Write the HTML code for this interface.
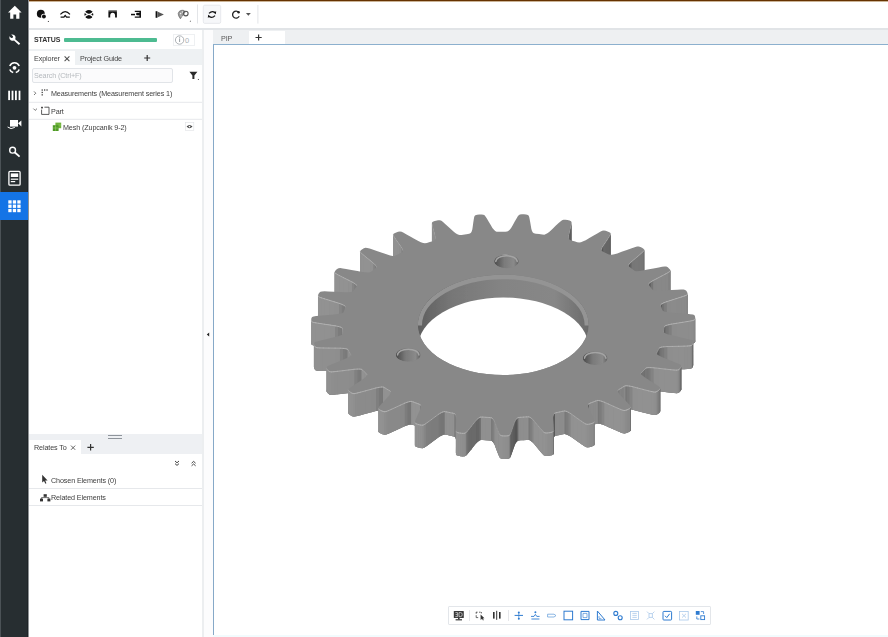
<!DOCTYPE html>
<html><head><meta charset="utf-8">
<style>
*{box-sizing:border-box;margin:0;padding:0}
html,body{width:888px;height:637px;overflow:hidden;background:#fff;font-family:"Liberation Sans",sans-serif;color:#333}
.a{position:absolute}
.t{position:absolute;white-space:nowrap;will-change:transform;font-size:7.2px;line-height:8px;color:#3d3d3d;letter-spacing:-0.12px}
</style></head><body>
<!-- sidebar -->
<div class="a" style="left:0;top:0;width:28px;height:637px;background:#272e31"></div>
<div class="a" style="left:0;top:0;width:1px;height:637px;background:#4b5256"></div>
<div class="a" style="left:27px;top:0;width:1px;height:637px;background:#1f2528"></div>
<div class="a" style="left:0;top:192px;width:28px;height:28px;background:#1474e6"></div>
<svg class="a" style="left:0;top:0" width="28" height="637" viewBox="0 0 28 637" fill="#fff">
  <!-- home -->
  <path d="M14.8 5.8 L21.6 12.4 L19.4 12.4 L19.4 18.8 L16.2 18.8 L16.2 14.6 L13.4 14.6 L13.4 18.8 L10.2 18.8 L10.2 12.4 L8 12.4 Z"/>
  <!-- wrench -->
  <path d="M9.3 36.2 L11.2 38 L12.8 37.8 L13 36.2 L11.2 34.6 Q14.4 34 15.4 36.6 Q15.8 38 15.2 39.2 L20.2 43.6 L18.9 45 L14 40.4 Q12.6 41 11 40.6 Q9 39.6 9.3 36.2Z"/>
  <!-- 3d eye -->
  <circle cx="14.5" cy="67.8" r="1.9"/>
  <path d="M9.8 66.09 A5 5 0 0 1 19.2 66.09" fill="none" stroke="#fff" stroke-width="1.6"/>
  <path d="M9.8 69.5 A5 5 0 0 0 13.2 72.6 M15.8 72.6 A5 5 0 0 0 19.2 69.5" fill="none" stroke="#fff" stroke-width="1.6"/>
  <!-- barcode -->
  <rect x="8.2" y="90.7" width="1.8" height="9.4"/><rect x="11.6" y="90.7" width="1.8" height="9.4"/><rect x="15" y="90.7" width="1.8" height="9.4"/><rect x="18.6" y="90.7" width="1.8" height="9.4"/>
  <!-- camera -->
  <rect x="10" y="120" width="8" height="6.6"/>
  <path d="M18 123.3 L21.4 120.4 L21.4 126.4 Z"/>
  <path d="M7.6 127 Q11 130 14.8 127.4" fill="none" stroke="#fff" stroke-width="1"/>
  <!-- search -->
  <circle cx="12.6" cy="150.2" r="2.9" fill="none" stroke="#fff" stroke-width="1.4"/>
  <path d="M14.6 152.2 L19.6 156.6" stroke="#fff" stroke-width="1.8"/>
  <!-- report -->
  <rect x="8.9" y="171.4" width="11.2" height="13.8" rx="1" fill="none" stroke="#fff" stroke-width="1.3"/>
  <rect x="10.8" y="173.4" width="7.4" height="3.6"/>
  <rect x="10.8" y="178.6" width="7.4" height="1.2"/>
  <rect x="10.8" y="181" width="4.4" height="1.2"/>
  <!-- grid -->
  <rect x="8.3" y="200.3" width="3.3" height="3.3"/><rect x="12.8" y="200.3" width="3.3" height="3.3"/><rect x="17.3" y="200.3" width="3.3" height="3.3"/>
  <rect x="8.3" y="204.6" width="3.3" height="3.3"/><rect x="12.8" y="204.6" width="3.3" height="3.3"/><rect x="17.3" y="204.6" width="3.3" height="3.3"/>
  <rect x="8.3" y="208.9" width="3.3" height="3.3"/><rect x="12.8" y="208.9" width="3.3" height="3.3"/><rect x="17.3" y="208.9" width="3.3" height="3.3"/>
</svg>

<!-- top brown line -->
<div class="a" style="left:28px;top:0;width:860px;height:1px;background:#663300"></div>
<div class="a" style="left:28px;top:1px;width:860px;height:1px;background:#cbb497"></div>

<!-- toolbar -->
<div class="a" style="left:28px;top:28px;width:860px;height:2px;background:#e1e4e7"></div>
<svg class="a" style="left:28px;top:2px" width="240" height="26" viewBox="28 2 240 26">
  <g fill="#111">
    <circle cx="40.8" cy="13.7" r="3.95"/>
    <circle cx="43.9" cy="16.5" r="2.8" fill="#fff"/>
    <circle cx="43.9" cy="16.5" r="1.95"/>
    <path d="M47.6 21.9 L48.9 20.7 L48.9 21.9Z"/>
    <path d="M60.4 14.4 Q65.2 8.8 70 14.4" fill="none" stroke="#111" stroke-width="1.1"/>
    <path d="M60.6 16.6 L63.6 16.6 L65.2 14.4 L66.8 16.6 L69.8 16.6 L69.8 17.8 L66.2 17.8 L65.2 16.4 L64.2 17.8 L60.6 17.8Z"/>
    <circle cx="88.9" cy="14.4" r="4.4"/>
    <path d="M84.3 11.6 Q88.9 17.4 93.5 11.6 M84.3 17.2 Q88.9 11.4 93.5 17.2" fill="none" stroke="#fff" stroke-width="1.2"/>
    <rect x="108.4" y="10.2" width="8.5" height="1" fill="#666"/>
    <path d="M108.4 11.3 L116.9 11.3 L116.9 17.4 L115.1 17.4 L115.1 15.6 A2.45 2.9 0 0 0 110.2 15.6 L110.2 17.4 L108.4 17.4Z"/>
    <path d="M134.8 10.7 L141 10.7 L141 17.8 L134.8 17.8 L134.8 16.4 L139.4 16.4 L139.4 15.2 L137.6 15.2 A1.4 1.4 0 0 1 136.6 12.8 L139.4 12.8 L139.4 12.1 L134.8 12.1Z"/>
    <rect x="131" y="13.8" width="4" height="1.5"/>
    <path d="M136.4 14.6 L139.4 14.6" stroke="#111" stroke-width="1"/>
    <rect x="155.6" y="11.2" width="1.7" height="6.6"/>
    <path d="M157.3 11.4 L163.9 14.5 L157.3 17.6Z" fill="#555"/>
    <path d="M180.4 18.8 Q178 15.6 178.2 13.4 Q178.8 10.6 182 10.2 Q184.6 10 185.4 11.8 L183.2 14.6 Q182.2 16 180.4 18.8Z" fill="#9a9a9a" stroke="#555" stroke-width="0.6"/>
    <circle cx="185.8" cy="13.6" r="2.3" fill="none" stroke="#555" stroke-width="1.1"/>
    <circle cx="180.6" cy="13.6" r="0.8" fill="#eee"/><circle cx="182.4" cy="12" r="0.7" fill="#eee"/><circle cx="181" cy="16" r="0.6" fill="#ddd"/>
    <path d="M189.6 21.6 L190.9 20.4 L190.9 21.6Z"/>
  </g>
  <rect x="197" y="4.5" width="1" height="19" fill="#e3e5e8"/>
  <rect x="203.3" y="5.2" width="17.4" height="18.2" rx="1.5" fill="#f6f7f9" stroke="#e2e5e8" stroke-width="0.8"/>
  <path d="M209 13.4 Q211.8 10.6 214.8 12.4 M215 15.6 Q212.2 18.6 209.2 16.6" fill="none" stroke="#111" stroke-width="1.25"/>
  <path d="M216.2 11.2 L215.8 14.2 L213.4 12.6Z M207.8 17.8 L208.2 14.8 L210.6 16.4Z" fill="#111"/>
  <path d="M238.8 12.4 A3.5 3.5 0 1 0 239.2 16.3" fill="none" stroke="#222" stroke-width="1.3"/>
  <circle cx="238.6" cy="12.2" r="1.2" fill="#222"/>
  <path d="M245.9 13 L250.8 13 L248.35 15.7Z" fill="#555"/>
  <rect x="257.4" y="5" width="1" height="18.6" fill="#e3e5e8"/>
</svg>

<!-- left panel -->
<div class="a" style="left:28px;top:30px;width:174px;height:19px;background:#fff"></div>
<div class="t" style="left:33.5px;top:36px;font-weight:bold;font-size:7px;color:#333">STATUS</div>
<div class="a" style="left:64px;top:38px;width:93px;height:4px;background:#4dbb91;border-radius:1px"></div>
<div class="a" style="left:172.5px;top:34px;width:22px;height:12.4px;border:1px solid #eef0f2;background:#fff"></div>
<svg class="a" style="left:172px;top:33px" width="24" height="14" viewBox="172 33 24 14">
  <circle cx="179.6" cy="40" r="4.2" fill="none" stroke="#9aa0a5" stroke-width="0.8"/>
  <rect x="179.1" y="38.4" width="1" height="3.6" fill="#9aa0a5"/>
  <rect x="179.1" y="36.8" width="1" height="1" fill="#9aa0a5"/>
  <text x="185" y="43" font-size="7.5" fill="#aab0b5" font-family="Liberation Sans">0</text>
</svg>
<div class="a" style="left:28px;top:49px;width:174px;height:16px;background:#eef1f3"></div>
<div class="a" style="left:28px;top:51px;width:47px;height:14px;background:#fff"></div>
<div class="t" style="left:33.5px;top:55.2px;color:#454545">Explorer</div>
<svg class="a" style="left:62px;top:53px" width="10" height="10" viewBox="62 53 10 10"><path d="M64.6 56.4 L69.4 61.2 M69.4 56.4 L64.6 61.2" stroke="#505050" stroke-width="1.05"/></svg>
<div class="t" style="left:79.6px;top:55.2px;color:#454545">Project Guide</div>
<svg class="a" style="left:143px;top:54px" width="8" height="8" viewBox="143 54 8 8"><path d="M147.2 55 L147.2 61 M144.2 58 L150.2 58" stroke="#333" stroke-width="1.2"/></svg>
<div class="a" style="left:28px;top:65.5px;width:174px;height:19px;background:#fff"></div>
<div class="a" style="left:31.5px;top:68.2px;width:141px;height:14.4px;border:1px solid #e1e4e8;border-radius:2px;background:#fbfbfc"></div>
<div class="t" style="left:34px;top:71.5px;color:#b5b9bd">Search (Ctrl+F)</div>
<svg class="a" style="left:186px;top:68px" width="16" height="16" viewBox="186 68 16 16">
  <path d="M189.4 71.8 L197.4 71.8 L194.4 75.4 L194.4 79.1 L192.4 79.1 L192.4 75.4Z" fill="#2a2a2a"/>
  <path d="M197.6 80 L198.9 78.8 L198.9 80Z" fill="#222"/>
</svg>
<!-- tree -->
<svg class="a" style="left:28px;top:84px" width="174" height="52" viewBox="28 84 174 52">
  <path d="M34 91.4 L35.8 93.2 L34 95" fill="none" stroke="#555" stroke-width="0.8"/>
  <g fill="#333">
    <rect x="41.6" y="89.4" width="1.2" height="1.3"/><rect x="41.6" y="91.8" width="1.2" height="1.3"/><rect x="41.6" y="94.2" width="1.2" height="1.3"/>
    <rect x="44" y="89.4" width="1.3" height="1.2"/><rect x="46.4" y="89.4" width="1.3" height="1.2"/>
  </g>
  <rect x="28" y="101.8" width="174" height="1" fill="#e6e8eb"/>
  <path d="M33.4 108.6 L35.2 110.4 L37 108.6" fill="none" stroke="#555" stroke-width="0.8"/>
  <path d="M44.4 107.2 L49 107.2 L49 114.4 L41.6 114.4 L41.6 109.6" fill="none" stroke="#333" stroke-width="0.8"/>
  <rect x="41.2" y="106.8" width="1.6" height="1.6" fill="#222"/>
  <rect x="28" y="118.8" width="174" height="1" fill="#e6e8eb"/>
  <!-- mesh icon -->
  <g>
    <rect x="55.4" y="122.6" width="5.8" height="5.6" fill="#6fb33a"/>
    <rect x="52.8" y="125.2" width="5.8" height="5.8" fill="#4e9a25"/>
    <path d="M53 128 L58.4 128 M55.6 125.4 L55.6 130.8 M58.4 125 L61 125" stroke="#a6d77a" stroke-width="0.5"/>
  </g>
  <rect x="185.3" y="122.5" width="8.5" height="8.1" fill="#fff" stroke="#dfe2e5" stroke-width="0.6"/>
  <path d="M186.6 126.6 Q189.5 123.4 192.5 126.6 Q189.5 129.8 186.6 126.6Z" fill="#444"/>
  <circle cx="189.5" cy="126.6" r="0.9" fill="#fff"/>
</svg>
<div class="t" style="left:51px;top:90px;color:#404040">Measurements (Measurement series 1)</div>
<div class="t" style="left:51px;top:107.5px;color:#404040">Part</div>
<div class="t" style="left:63px;top:123.5px;color:#404040">Mesh (Zupcanik 9-2)</div>

<!-- relates to panel -->
<div class="a" style="left:28px;top:433.5px;width:174px;height:20.5px;background:#eef0f3"></div>
<div class="a" style="left:108px;top:435px;width:14px;height:1.3px;background:#8f959c"></div>
<div class="a" style="left:108px;top:437.8px;width:14px;height:1.3px;background:#8f959c"></div>
<div class="a" style="left:28px;top:440.4px;width:52.7px;height:13.6px;background:#fff"></div>
<div class="t" style="left:33.5px;top:444px;color:#404040">Relates To</div>
<svg class="a" style="left:66px;top:442px" width="14" height="12" viewBox="66 442 14 12"><path d="M71 445.6 L75.2 449.8 M75.2 445.6 L71 449.8" stroke="#555" stroke-width="0.9"/></svg>
<svg class="a" style="left:84px;top:442px" width="12" height="12" viewBox="84 442 12 12"><path d="M90.6 444 L90.6 450.6 M87.4 447.3 L93.8 447.3" stroke="#333" stroke-width="1.2"/></svg>
<svg class="a" style="left:170px;top:456px" width="32" height="14" viewBox="170 456 32 14">
  <path d="M175 461 L177 462.8 L179 461 M175 463.6 L177 465.4 L179 463.6" fill="none" stroke="#3a3a3a" stroke-width="0.95"/>
  <path d="M191.6 463.2 L193.6 461.4 L195.6 463.2 M191.6 465.8 L193.6 464 L195.6 465.8" fill="none" stroke="#3a3a3a" stroke-width="0.95"/>
</svg>
<svg class="a" style="left:38px;top:472px" width="14" height="34" viewBox="38 472 14 34">
  <path d="M42.2 474.8 L42.2 482.6 L44 481 L45.4 483.8 L46.4 483.2 L45.2 480.6 L47.6 480.4Z" fill="#333"/>
  <rect x="43.6" y="494.2" width="3.2" height="2.6" fill="#333"/>
  <rect x="40" y="498.6" width="3" height="2.8" fill="#333"/>
  <rect x="47.4" y="498.6" width="3" height="2.8" fill="#333"/>
  <path d="M45.2 496.6 L45.2 497.6 L41.5 497.6 L41.5 498.8 M45.2 497.6 L48.9 497.6 L48.9 498.8" fill="none" stroke="#333" stroke-width="0.7"/>
</svg>
<div class="t" style="left:51.4px;top:476.5px;color:#404040">Chosen Elements (0)</div>
<div class="a" style="left:28px;top:488.4px;width:174px;height:1px;background:#e6e8eb"></div>
<div class="t" style="left:51.4px;top:494px;color:#404040">Related Elements</div>
<div class="a" style="left:28px;top:505.4px;width:174px;height:1px;background:#e6e8eb"></div>

<!-- panel border & gap -->
<div class="a" style="left:202px;top:30px;width:2px;height:607px;background:#eceef0"></div>
<div class="a" style="left:204px;top:30px;width:9px;height:607px;background:#fcfcfd"></div>
<svg class="a" style="left:205px;top:330px" width="6" height="8" viewBox="205 330 6 8"><path d="M209.2 332.4 L209.2 336.4 L206.8 334.4Z" fill="#222"/></svg>

<!-- view tab bar -->
<div class="a" style="left:213px;top:30px;width:675px;height:14.5px;background:#eef0f2"></div>
<div class="a" style="left:249px;top:31px;width:35.5px;height:13.5px;background:#fff"></div>
<div class="t" style="left:220.5px;top:34.5px;color:#5a5a5a">PIP</div>
<svg class="a" style="left:252px;top:32px" width="12" height="12" viewBox="252 32 12 12"><path d="M258.6 34.4 L258.6 40.6 M255.5 37.5 L261.7 37.5" stroke="#333" stroke-width="1.2"/></svg>

<!-- view -->
<div class="a" style="left:213px;top:44.2px;width:675px;height:592.8px;background:#fff;border-left:1.6px solid #86a9c8;border-top:1.6px solid #8cb0ce"></div>
<svg width="888" height="637" viewBox="0 0 888 637" style="position:absolute;left:0;top:0">
<defs>
<linearGradient id="hw" x1="0" y1="0" x2="1" y2="0"><stop offset="0" stop-color="#5e5e5e"/><stop offset="0.2" stop-color="#777"/><stop offset="0.5" stop-color="#848484"/><stop offset="0.8" stop-color="#878787"/><stop offset="1" stop-color="#6a6a6a"/></linearGradient>
<linearGradient id="sw" x1="0" y1="0" x2="1" y2="0"><stop offset="0" stop-color="#4a4a4a"/><stop offset="0.4" stop-color="#7a7a7a"/><stop offset="0.8" stop-color="#8a8a8a"/><stop offset="1" stop-color="#606060"/></linearGradient>
<filter id="bl" x="-5%" y="-5%" width="110%" height="110%"><feGaussianBlur stdDeviation="0.35"/></filter>
</defs>
<g filter="url(#bl)">
<path d="M486.00 440.32L489.27 440.50L491.29 440.77L492.52 441.58L493.66 443.01L494.65 444.78L495.75 447.70L497.05 451.20L498.31 454.40L499.10 456.32L499.91 457.78L500.96 458.54L502.80 458.89L504.98 458.95L507.16 458.87L508.98 458.50L510.01 457.73L510.77 456.26L511.51 454.34L512.67 451.12L513.86 447.61L514.87 444.67L515.82 442.90L516.91 441.45L518.12 440.64L520.13 440.35L523.38 440.13L526.63 439.88L528.71 439.87L530.23 440.48L531.90 441.73L533.58 443.31L535.82 446.01L538.48 449.24L540.98 452.19L542.52 453.96L543.88 455.26L545.21 455.86L547.13 455.96L549.28 455.73L551.37 455.36L553.00 454.75L553.69 453.87L553.85 452.34L553.79 450.37L553.64 447.09L553.40 443.51L553.21 440.52L553.42 438.66L553.91 437.12L554.76 436.16L556.60 435.61L559.68 434.97L562.74 434.28L564.76 434.00L566.48 434.40L568.61 435.38L570.87 436.70L574.12 439.03L578.00 441.82L581.61 444.36L583.81 445.87L585.67 446.96L587.19 447.36L589.11 447.21L591.10 446.69L592.99 446.05L594.33 445.25L594.65 444.29L594.19 442.79L593.36 440.87L591.90 437.70L590.24 434.25L588.86 431.37L588.32 429.53L588.18 427.96L588.62 426.92L590.20 426.14L592.94 425.10L595.65 424.03L597.49 423.48L599.33 423.64L601.79 424.32L604.52 425.30L608.62 427.13L613.50 429.33L618.03 431.32L620.77 432.49L623.01 433.31L624.66 433.50L626.46 433.09L628.19 432.32L629.77 431.45L630.76 430.49L630.68 429.52L629.64 428.11L628.07 426.36L625.38 423.47L622.39 420.33L619.90 417.71L618.64 416.00L617.87 414.49L617.89 413.41L619.11 412.44L621.37 411.07L623.57 409.66L625.15 408.89L627.00 408.80L629.67 409.12L632.72 409.72L637.43 410.95L643.06 412.44L648.26 413.77L651.40 414.55L653.90 415.04L655.58 415.01L657.17 414.37L658.54 413.39L659.74 412.34L660.31 411.27L659.85 410.33L658.28 409.11L656.05 407.61L652.28 405.16L648.12 402.50L644.65 400.28L642.74 398.78L641.39 397.42L640.98 396.37L641.78 395.26L643.43 393.62L645.01 391.97L646.24 391.00L648.01 390.66L650.73 390.63L653.93 390.80L659.01 391.37L665.09 392.07L670.67 392.67L674.04 393.01L676.67 393.16L678.29 392.90L679.58 392.07L680.53 390.93L681.27 389.75L681.40 388.63L680.58 387.78L678.56 386.79L675.79 385.64L671.15 383.75L666.04 381.73L661.78 380.03L659.33 378.82L657.47 377.67L656.65 376.71L656.99 375.52L657.93 373.71L658.81 371.89L659.62 370.78L661.21 370.22L663.84 369.82L667.03 369.56L672.20 369.44L678.39 369.31L684.06 369.15L687.47 369.03L690.09 368.83L691.57 368.36L692.49 367.38L692.96 366.14L693.21 364.89L692.89 363.79L691.76 363.07L689.40 362.38L686.24 361.63L680.97 360.41L675.19 359.12L670.36 358.03L667.50 357.19L665.23 356.32L664.05 355.49L663.91 354.29L664.10 352.40L664.23 350.51L664.58 349.32L665.89 348.57L668.30 347.83L671.30 347.15L676.28 346.35L682.25 345.39L687.71 344.48L690.98 343.91L693.44 343.36L694.70 342.71L695.20 341.63L695.17 340.37L694.91 339.12L694.16 338.08L692.77 337.54L690.20 337.18L686.83 336.87L681.21 336.39L675.07 335.90L669.94 335.49L666.82 335.05L664.26 334.50L662.79 333.85L662.17 332.71L661.60 330.84L660.97 328.98L660.84 327.79L661.82 326.87L663.86 325.83L666.51 324.77L671.04 323.33L676.47 321.60L681.42 319.99L684.37 319.00L686.55 318.13L687.51 317.34L687.57 316.22L687.03 314.99L686.28 313.81L685.14 312.90L683.57 312.56L680.93 312.56L677.52 312.70L671.86 312.98L665.69 313.33L660.54 313.61L657.32 313.60L654.62 313.41L652.92 312.97L651.86 311.94L650.57 310.20L649.22 308.47L648.61 307.33L649.19 306.31L650.77 305.02L652.92 303.64L656.75 301.63L661.35 299.23L665.52 297.00L668.00 295.64L669.77 294.51L670.39 293.60L670.00 292.51L668.99 291.39L667.79 290.33L666.32 289.61L664.65 289.48L662.08 289.83L658.82 290.42L653.42 291.45L647.56 292.61L642.66 293.57L639.53 293.99L636.82 294.16L634.99 293.97L633.55 293.10L631.60 291.58L629.59 290.08L628.54 289.05L628.71 287.98L629.73 286.52L631.27 284.89L634.19 282.42L637.71 279.47L640.88 276.74L642.75 275.09L644.02 273.75L644.26 272.79L643.45 271.78L642.02 270.82L640.43 269.96L638.70 269.45L637.03 269.54L634.67 270.23L631.73 271.24L626.89 272.96L621.65 274.87L617.27 276.46L614.38 277.28L611.82 277.81L609.96 277.86L608.22 277.21L605.71 275.99L603.16 274.80L601.72 273.94L601.46 272.87L601.87 271.32L602.72 269.52L604.58 266.73L606.82 263.40L608.82 260.32L609.98 258.46L610.69 256.99L610.53 256.02L609.34 255.14L607.56 254.41L605.67 253.78L603.79 253.51L602.20 253.83L600.17 254.81L597.73 256.18L593.70 258.50L589.36 261.06L585.73 263.19L583.25 264.37L580.97 265.23L579.18 265.53L577.23 265.13L574.30 264.28L571.34 263.46L569.60 262.81L568.92 261.81L568.70 260.24L568.81 258.38L569.50 255.42L570.35 251.87L571.07 248.61L571.46 246.65L571.56 245.13L571.03 244.20L569.51 243.51L567.49 243.03L565.40 242.67L563.46 242.66L562.04 243.18L560.46 244.40L558.63 246.07L555.63 248.86L552.43 251.92L549.75 254.48L547.81 255.97L545.93 257.11L544.31 257.63L542.25 257.51L539.06 257.07L535.86 256.66L533.90 256.26L532.84 255.38L532.00 253.88L531.37 252.06L530.86 249.08L530.27 245.52L529.67 242.25L529.26 240.29L528.75 238.79L527.87 237.97L526.11 237.49L523.96 237.29L521.78 237.22L519.89 237.47L518.72 238.17L517.66 239.57L516.54 241.43L514.75 244.55L512.86 247.96L511.26 250.81L509.97 252.51L508.60 253.87L507.23 254.60L505.17 254.75L501.90 254.75L498.62 254.78L496.55 254.65L495.17 253.93L493.75 252.59L492.41 250.90L490.73 248.07L488.74 244.68L486.85 241.58L485.67 239.73L484.58 238.34L483.38 237.66L481.49 237.43L479.31 237.52L477.16 237.74L475.42 238.23L474.56 239.07L474.09 240.57L473.75 242.54L473.24 245.81L472.76 249.38L472.35 252.36L471.77 254.19L470.98 255.69L469.94 256.58L468.00 257.01L464.81 257.44L461.63 257.91L459.57 258.06L457.94 257.55L456.02 256.43L454.04 254.96L451.28 252.43L447.99 249.40L444.91 246.64L443.03 244.99L441.41 243.79L439.97 243.28L438.04 243.31L435.96 243.69L433.95 244.19L432.46 244.90L431.95 245.83L432.10 247.36L432.55 249.31L433.36 252.56L434.32 256.10L435.10 259.06L435.27 260.91L435.10 262.48L434.44 263.49L432.72 264.16L429.79 265.01L426.89 265.89L424.94 266.31L423.15 266.03L420.84 265.19L418.33 264.03L414.63 261.94L410.22 259.43L406.12 257.15L403.63 255.80L401.58 254.84L399.98 254.54L398.11 254.82L396.23 255.47L394.48 256.23L393.31 257.12L393.19 258.09L393.94 259.55L395.16 261.40L397.25 264.45L399.59 267.77L401.53 270.54L402.44 272.32L402.90 273.88L402.66 274.94L401.25 275.82L398.74 277.04L396.27 278.28L394.54 278.95L392.68 278.92L390.11 278.41L387.20 277.62L382.76 276.07L377.47 274.22L372.57 272.55L369.61 271.56L367.23 270.91L365.55 270.82L363.84 271.35L362.28 272.23L360.88 273.20L360.10 274.23L360.36 275.18L361.68 276.51L363.60 278.14L366.85 280.84L370.45 283.75L373.45 286.19L375.04 287.80L376.11 289.25L376.30 290.32L375.29 291.36L373.32 292.88L371.42 294.42L370.00 295.30L368.18 295.52L365.47 295.37L362.32 294.98L357.39 294.07L351.50 292.97L346.07 292.00L342.80 291.44L340.22 291.12L338.55 291.26L337.10 292.00L335.93 293.07L334.95 294.20L334.60 295.30L335.24 296.20L337.05 297.31L339.57 298.64L343.81 300.83L348.48 303.18L352.37 305.16L354.56 306.52L356.18 307.78L356.79 308.80L356.22 309.95L354.92 311.69L353.68 313.44L352.65 314.49L350.96 314.94L348.27 315.16L345.05 315.20L339.89 314.97L333.72 314.69L328.05 314.46L324.64 314.35L322.00 314.38L320.43 314.74L319.32 315.66L318.60 316.85L318.11 318.08L318.20 319.20L319.18 319.99L321.39 320.83L324.37 321.79L329.37 323.35L334.85 325.02L339.42 326.42L342.10 327.46L344.17 328.47L345.18 329.38L345.08 330.58L344.51 332.44L344.00 334.31L343.42 335.46L341.96 336.13L339.42 336.70L336.31 337.17L331.20 337.64L325.07 338.18L319.47 338.72L316.11 339.07L313.55 339.45L312.17 340.01L311.46 341.05L311.24 342.31L311.24 343.57L311.78 344.64L313.05 345.28L315.53 345.80L318.82 346.34L324.30 347.20L330.30 348.09L335.31 348.85L338.33 349.49L340.75 350.21L342.09 350.95L342.47 352.13L342.66 354.02L342.91 355.91L342.81 357.11L341.65 357.95L339.41 358.84L336.57 359.72L331.78 360.85L326.04 362.20L320.80 363.47L317.67 364.26L315.33 364.97L314.22 365.70L313.93 366.80L314.22 368.06L314.73 369.28L315.68 370.26L317.17 370.71L319.80 370.89L323.21 370.97L328.89 371.07L335.08 371.14L340.25 371.21L343.45 371.44L346.09 371.81L347.69 372.35L348.54 373.45L349.47 375.27L350.47 377.07L350.85 378.25L350.06 379.22L348.23 380.39L345.82 381.62L341.61 383.36L336.57 385.44L331.97 387.37L329.24 388.56L327.25 389.56L326.46 390.42L326.62 391.53L327.40 392.71L328.38 393.84L329.70 394.66L331.33 394.90L333.95 394.72L337.31 394.35L342.88 393.69L348.93 392.94L353.99 392.31L357.19 392.11L359.91 392.12L361.69 392.43L362.94 393.39L364.58 395.03L366.27 396.65L367.10 397.75L366.73 398.80L365.42 400.18L363.56 401.70L360.16 403.96L356.08 406.65L352.38 409.14L350.19 410.66L348.66 411.90L348.23 412.84L348.83 413.91L350.06 414.95L351.47 415.91L353.08 416.54L354.76 416.55L357.24 416.03L360.36 415.22L365.51 413.84L371.10 412.30L375.77 411.01L378.80 410.39L381.46 410.03L383.31 410.11L384.92 410.87L387.16 412.25L389.46 413.60L390.71 414.56L390.76 415.63L390.04 417.15L388.83 418.88L386.42 421.52L383.53 424.69L380.93 427.61L379.40 429.37L378.40 430.79L378.36 431.76L379.37 432.71L380.98 433.57L382.74 434.32L384.55 434.71L386.19 434.50L388.40 433.66L391.11 432.46L395.58 430.43L400.40 428.18L404.43 426.31L407.13 425.30L409.57 424.60L411.41 424.42L413.27 424.95L416.01 425.99L418.78 427.00L420.38 427.77L420.86 428.81L420.76 430.38L420.28 432.22L418.99 435.12L417.43 438.58L416.07 441.77L415.29 443.69L414.88 445.20L415.22 446.15L416.59 446.94L418.50 447.56L420.51 448.06L422.43 448.20L423.94 447.77L425.76 446.66L427.91 445.13L431.45 442.56L435.24 439.73L438.42 437.37L440.65 436.03L442.74 435.02L444.45 434.61L446.48 434.87L449.56 435.52L452.66 436.13L454.52 436.67L455.40 437.61L455.93 439.16L456.19 441.01L456.10 444.00L455.97 447.58L455.91 450.86L455.92 452.84L456.12 454.36L456.84 455.24L458.49 455.83L460.59 456.17L462.74 456.39L464.66 456.27L465.97 455.66L467.29 454.33L468.78 452.56L471.19 449.58L473.75 446.32L475.91 443.60L477.54 442.00L479.17 440.74L480.67 440.11L482.75 440.10Z" fill="#858585"/>
<path d="M571.46 223.65L571.56 222.13L571.56 245.13L571.46 246.65ZM431.95 222.83L432.10 224.36L432.10 247.36L431.95 245.83ZM571.07 225.61L571.46 223.65L571.46 246.65L571.07 248.61ZM432.10 224.36L432.55 226.31L432.55 249.31L432.10 247.36ZM570.35 228.87L571.07 225.61L571.07 248.61L570.35 251.87ZM432.55 226.31L433.36 229.56L433.36 252.56L432.55 249.31ZM569.50 232.42L570.35 228.87L570.35 251.87L569.50 255.42ZM433.36 229.56L434.32 233.10L434.32 256.10L433.36 252.56ZM568.81 235.38L569.50 232.42L569.50 255.42L568.81 258.38ZM434.32 233.10L435.10 236.06L435.10 259.06L434.32 256.10ZM609.98 235.46L610.69 233.99L610.69 256.99L609.98 258.46ZM393.19 235.09L393.94 236.55L393.94 259.55L393.19 258.09ZM568.70 237.24L568.81 235.38L568.81 258.38L568.70 260.24ZM608.82 237.32L609.98 235.46L609.98 258.46L608.82 260.32ZM435.10 236.06L435.27 237.91L435.27 260.91L435.10 259.06ZM393.94 236.55L395.16 238.40L395.16 261.40L393.94 259.55ZM606.82 240.40L608.82 237.32L608.82 260.32L606.82 263.40ZM395.16 238.40L397.25 241.45L397.25 264.45L395.16 261.40ZM604.58 243.73L606.82 240.40L606.82 263.40L604.58 266.73ZM397.25 241.45L399.59 244.77L399.59 267.77L397.25 264.45ZM602.72 246.52L604.58 243.73L604.58 266.73L602.72 269.52ZM399.59 244.77L401.53 247.54L401.53 270.54L399.59 267.77ZM601.87 248.32L602.72 246.52L602.72 269.52L601.87 271.32ZM401.53 247.54L402.44 249.32L402.44 272.32L401.53 270.54ZM601.46 249.87L601.87 248.32L601.87 271.32L601.46 272.87ZM402.44 249.32L402.90 250.88L402.90 273.88L402.44 272.32ZM644.02 250.75L644.26 249.79L644.26 272.79L644.02 273.75ZM642.75 252.09L644.02 250.75L644.02 273.75L642.75 275.09ZM360.10 251.23L360.36 252.18L360.36 275.18L360.10 274.23ZM360.36 252.18L361.68 253.51L361.68 276.51L360.36 275.18ZM640.88 253.74L642.75 252.09L642.75 275.09L640.88 276.74ZM361.68 253.51L363.60 255.14L363.60 278.14L361.68 276.51ZM637.71 256.47L640.88 253.74L640.88 276.74L637.71 279.47ZM363.60 255.14L366.85 257.84L366.85 280.84L363.60 278.14ZM634.19 259.42L637.71 256.47L637.71 279.47L634.19 282.42ZM366.85 257.84L370.45 260.75L370.45 283.75L366.85 280.84ZM631.27 261.89L634.19 259.42L634.19 282.42L631.27 284.89ZM370.45 260.75L373.45 263.19L373.45 286.19L370.45 283.75ZM629.73 263.52L631.27 261.89L631.27 284.89L629.73 286.52ZM373.45 263.19L375.04 264.80L375.04 287.80L373.45 286.19ZM628.71 264.98L629.73 263.52L629.73 286.52L628.71 287.98ZM628.54 266.05L628.71 264.98L628.71 287.98L628.54 289.05ZM375.04 264.80L376.11 266.25L376.11 289.25L375.04 287.80ZM376.11 266.25L376.30 267.32L376.30 290.32L376.11 289.25ZM669.77 271.51L670.39 270.60L670.39 293.60L669.77 294.51ZM668.00 272.64L669.77 271.51L669.77 294.51L668.00 295.64ZM334.60 272.30L335.24 273.20L335.24 296.20L334.60 295.30ZM665.52 274.00L668.00 272.64L668.00 295.64L665.52 297.00ZM335.24 273.20L337.05 274.31L337.05 297.31L335.24 296.20ZM337.05 274.31L339.57 275.64L339.57 298.64L337.05 297.31ZM661.35 276.23L665.52 274.00L665.52 297.00L661.35 299.23ZM339.57 275.64L343.81 277.83L343.81 300.83L339.57 298.64ZM656.75 278.63L661.35 276.23L661.35 299.23L656.75 301.63ZM343.81 277.83L348.48 280.18L348.48 303.18L343.81 300.83ZM652.92 280.64L656.75 278.63L656.75 301.63L652.92 303.64ZM348.48 280.18L352.37 282.16L352.37 305.16L348.48 303.18ZM650.77 282.02L652.92 280.64L652.92 303.64L650.77 305.02ZM649.19 283.31L650.77 282.02L650.77 305.02L649.19 306.31ZM352.37 282.16L354.56 283.52L354.56 306.52L352.37 305.16ZM648.61 284.33L649.19 283.31L649.19 306.31L648.61 307.33ZM354.56 283.52L356.18 284.78L356.18 307.78L354.56 306.52ZM356.18 284.78L356.79 285.80L356.79 308.80L356.18 307.78ZM687.51 294.34L687.57 293.22L687.57 316.22L687.51 317.34ZM686.55 295.13L687.51 294.34L687.51 317.34L686.55 318.13ZM684.37 296.00L686.55 295.13L686.55 318.13L684.37 319.00ZM318.11 295.08L318.20 296.20L318.20 319.20L318.11 318.08ZM681.42 296.99L684.37 296.00L684.37 319.00L681.42 319.99ZM318.20 296.20L319.18 296.99L319.18 319.99L318.20 319.20ZM319.18 296.99L321.39 297.83L321.39 320.83L319.18 319.99ZM676.47 298.60L681.42 296.99L681.42 319.99L676.47 321.60ZM321.39 297.83L324.37 298.79L324.37 321.79L321.39 320.83ZM671.04 300.33L676.47 298.60L676.47 321.60L671.04 323.33ZM324.37 298.79L329.37 300.35L329.37 323.35L324.37 321.79ZM666.51 301.77L671.04 300.33L671.04 323.33L666.51 324.77ZM329.37 300.35L334.85 302.02L334.85 325.02L329.37 323.35ZM663.86 302.83L666.51 301.77L666.51 324.77L663.86 325.83ZM334.85 302.02L339.42 303.42L339.42 326.42L334.85 325.02ZM661.82 303.87L663.86 302.83L663.86 325.83L661.82 326.87ZM339.42 303.42L342.10 304.46L342.10 327.46L339.42 326.42ZM660.84 304.79L661.82 303.87L661.82 326.87L660.84 327.79ZM342.10 304.46L344.17 305.47L344.17 328.47L342.10 327.46ZM344.17 305.47L345.18 306.38L345.18 329.38L344.17 328.47ZM694.70 319.71L695.20 318.63L695.20 341.63L694.70 342.71ZM311.24 319.31L311.24 320.57L311.24 343.57L311.24 342.31ZM693.44 320.36L694.70 319.71L694.70 342.71L693.44 343.36ZM690.98 320.91L693.44 320.36L693.44 343.36L690.98 343.91ZM311.24 320.57L311.78 321.64L311.78 344.64L311.24 343.57ZM687.71 321.48L690.98 320.91L690.98 343.91L687.71 344.48ZM682.25 322.39L687.71 321.48L687.71 344.48L682.25 345.39ZM311.78 321.64L313.05 322.28L313.05 345.28L311.78 344.64ZM313.05 322.28L315.53 322.80L315.53 345.80L313.05 345.28ZM676.28 323.35L682.25 322.39L682.25 345.39L676.28 346.35ZM315.53 322.80L318.82 323.34L318.82 346.34L315.53 345.80ZM671.30 324.15L676.28 323.35L676.28 346.35L671.30 347.15ZM318.82 323.34L324.30 324.20L324.30 347.20L318.82 346.34ZM668.30 324.83L671.30 324.15L671.30 347.15L668.30 347.83ZM324.30 324.20L330.30 325.09L330.30 348.09L324.30 347.20ZM665.89 325.57L668.30 324.83L668.30 347.83L665.89 348.57ZM330.30 325.09L335.31 325.85L335.31 348.85L330.30 348.09ZM664.58 326.32L665.89 325.57L665.89 348.57L664.58 349.32ZM335.31 325.85L338.33 326.49L338.33 349.49L335.31 348.85ZM338.33 326.49L340.75 327.21L340.75 350.21L338.33 349.49ZM664.23 327.51L664.58 326.32L664.58 349.32L664.23 350.51ZM340.75 327.21L342.09 327.95L342.09 350.95L340.75 350.21ZM664.10 329.40L664.23 327.51L664.23 350.51L664.10 352.40ZM342.09 327.95L342.47 329.13L342.47 352.13L342.09 350.95ZM342.47 329.13L342.66 331.02L342.66 354.02L342.47 352.13ZM663.91 331.29L664.10 329.40L664.10 352.40L663.91 354.29ZM342.66 331.02L342.91 332.91L342.91 355.91L342.66 354.02ZM692.96 343.14L693.21 341.89L693.21 364.89L692.96 366.14ZM692.49 344.38L692.96 343.14L692.96 366.14L692.49 367.38ZM313.93 343.80L314.22 345.06L314.22 368.06L313.93 366.80ZM691.57 345.36L692.49 344.38L692.49 367.38L691.57 368.36ZM690.09 345.83L691.57 345.36L691.57 368.36L690.09 368.83ZM314.22 345.06L314.73 346.28L314.73 369.28L314.22 368.06ZM687.47 346.03L690.09 345.83L690.09 368.83L687.47 369.03ZM684.06 346.15L687.47 346.03L687.47 369.03L684.06 369.15ZM678.39 346.31L684.06 346.15L684.06 369.15L678.39 369.31ZM672.20 346.44L678.39 346.31L678.39 369.31L672.20 369.44ZM667.03 346.56L672.20 346.44L672.20 369.44L667.03 369.56ZM663.84 346.82L667.03 346.56L667.03 369.56L663.84 369.82ZM314.73 346.28L315.68 347.26L315.68 370.26L314.73 369.28ZM661.21 347.22L663.84 346.82L663.84 369.82L661.21 370.22ZM315.68 347.26L317.17 347.71L317.17 370.71L315.68 370.26ZM659.62 347.78L661.21 347.22L661.21 370.22L659.62 370.78ZM317.17 347.71L319.80 347.89L319.80 370.89L317.17 370.71ZM319.80 347.89L323.21 347.97L323.21 370.97L319.80 370.89ZM323.21 347.97L328.89 348.07L328.89 371.07L323.21 370.97ZM328.89 348.07L335.08 348.14L335.08 371.14L328.89 371.07ZM335.08 348.14L340.25 348.21L340.25 371.21L335.08 371.14ZM340.25 348.21L343.45 348.44L343.45 371.44L340.25 371.21ZM658.81 348.89L659.62 347.78L659.62 370.78L658.81 371.89ZM343.45 348.44L346.09 348.81L346.09 371.81L343.45 371.44ZM346.09 348.81L347.69 349.35L347.69 372.35L346.09 371.81ZM657.93 350.71L658.81 348.89L658.81 371.89L657.93 373.71ZM347.69 349.35L348.54 350.45L348.54 373.45L347.69 372.35ZM348.54 350.45L349.47 352.27L349.47 375.27L348.54 373.45ZM656.99 352.52L657.93 350.71L657.93 373.71L656.99 375.52ZM656.65 353.71L656.99 352.52L656.99 375.52L656.65 376.71ZM349.47 352.27L350.47 354.07L350.47 377.07L349.47 375.27ZM350.47 354.07L350.85 355.25L350.85 378.25L350.47 377.07ZM681.27 366.75L681.40 365.63L681.40 388.63L681.27 389.75ZM680.53 367.93L681.27 366.75L681.27 389.75L680.53 390.93ZM648.01 367.66L650.73 367.63L650.73 390.63L648.01 390.66ZM650.73 367.63L653.93 367.80L653.93 390.80L650.73 390.63ZM646.24 368.00L648.01 367.66L648.01 390.66L646.24 391.00ZM326.46 367.42L326.62 368.53L326.62 391.53L326.46 390.42ZM653.93 367.80L659.01 368.37L659.01 391.37L653.93 390.80ZM645.01 368.97L646.24 368.00L646.24 391.00L645.01 391.97ZM679.58 369.07L680.53 367.93L680.53 390.93L679.58 392.07ZM659.01 368.37L665.09 369.07L665.09 392.07L659.01 391.37ZM357.19 369.11L359.91 369.12L359.91 392.12L357.19 392.11ZM326.62 368.53L327.40 369.71L327.40 392.71L326.62 391.53ZM353.99 369.31L357.19 369.11L357.19 392.11L353.99 392.31ZM359.91 369.12L361.69 369.43L361.69 392.43L359.91 392.12ZM665.09 369.07L670.67 369.67L670.67 392.67L665.09 392.07ZM678.29 369.90L679.58 369.07L679.58 392.07L678.29 392.90ZM348.93 369.94L353.99 369.31L353.99 392.31L348.93 392.94ZM643.43 370.62L645.01 368.97L645.01 391.97L643.43 393.62ZM670.67 369.67L674.04 370.01L674.04 393.01L670.67 392.67ZM361.69 369.43L362.94 370.39L362.94 393.39L361.69 392.43ZM676.67 370.16L678.29 369.90L678.29 392.90L676.67 393.16ZM674.04 370.01L676.67 370.16L676.67 393.16L674.04 393.01ZM327.40 369.71L328.38 370.84L328.38 393.84L327.40 392.71ZM342.88 370.69L348.93 369.94L348.93 392.94L342.88 393.69ZM337.31 371.35L342.88 370.69L342.88 393.69L337.31 394.35ZM362.94 370.39L364.58 372.03L364.58 395.03L362.94 393.39ZM328.38 370.84L329.70 371.66L329.70 394.66L328.38 393.84ZM641.78 372.26L643.43 370.62L643.43 393.62L641.78 395.26ZM333.95 371.72L337.31 371.35L337.31 394.35L333.95 394.72ZM329.70 371.66L331.33 371.90L331.33 394.90L329.70 394.66ZM331.33 371.90L333.95 371.72L333.95 394.72L331.33 394.90ZM640.98 373.37L641.78 372.26L641.78 395.26L640.98 396.37ZM364.58 372.03L366.27 373.65L366.27 396.65L364.58 395.03ZM366.27 373.65L367.10 374.75L367.10 397.75L366.27 396.65ZM625.15 385.89L627.00 385.80L627.00 408.80L625.15 408.89ZM627.00 385.80L629.67 386.12L629.67 409.12L627.00 408.80ZM623.57 386.66L625.15 385.89L625.15 408.89L623.57 409.66ZM629.67 386.12L632.72 386.72L632.72 409.72L629.67 409.12ZM381.46 387.03L383.31 387.11L383.31 410.11L381.46 410.03ZM378.80 387.39L381.46 387.03L381.46 410.03L378.80 410.39ZM632.72 386.72L637.43 387.95L637.43 410.95L632.72 409.72ZM621.37 388.07L623.57 386.66L623.57 409.66L621.37 411.07ZM383.31 387.11L384.92 387.87L384.92 410.87L383.31 410.11ZM375.77 388.01L378.80 387.39L378.80 410.39L375.77 411.01ZM384.92 387.87L387.16 389.25L387.16 412.25L384.92 410.87ZM371.10 389.30L375.77 388.01L375.77 411.01L371.10 412.30ZM637.43 387.95L643.06 389.44L643.06 412.44L637.43 410.95ZM619.11 389.44L621.37 388.07L621.37 411.07L619.11 412.44ZM659.74 389.34L660.31 388.27L660.31 411.27L659.74 412.34ZM658.54 390.39L659.74 389.34L659.74 412.34L658.54 413.39ZM387.16 389.25L389.46 390.60L389.46 413.60L387.16 412.25ZM617.89 390.41L619.11 389.44L619.11 412.44L617.89 413.41ZM365.51 390.84L371.10 389.30L371.10 412.30L365.51 413.84ZM643.06 389.44L648.26 390.77L648.26 413.77L643.06 412.44ZM348.23 389.84L348.83 390.91L348.83 413.91L348.23 412.84ZM657.17 391.37L658.54 390.39L658.54 413.39L657.17 414.37ZM617.87 391.49L617.89 390.41L617.89 413.41L617.87 414.49ZM389.46 390.60L390.71 391.56L390.71 414.56L389.46 413.60ZM648.26 390.77L651.40 391.55L651.40 414.55L648.26 413.77ZM348.83 390.91L350.06 391.95L350.06 414.95L348.83 413.91ZM360.36 392.22L365.51 390.84L365.51 413.84L360.36 415.22ZM655.58 392.01L657.17 391.37L657.17 414.37L655.58 415.01ZM651.40 391.55L653.90 392.04L653.90 415.04L651.40 414.55ZM653.90 392.04L655.58 392.01L655.58 415.01L653.90 415.04ZM390.71 391.56L390.76 392.63L390.76 415.63L390.71 414.56ZM350.06 391.95L351.47 392.91L351.47 415.91L350.06 414.95ZM357.24 393.03L360.36 392.22L360.36 415.22L357.24 416.03ZM351.47 392.91L353.08 393.54L353.08 416.54L351.47 415.91ZM354.76 393.55L357.24 393.03L357.24 416.03L354.76 416.55ZM353.08 393.54L354.76 393.55L354.76 416.55L353.08 416.54ZM597.49 400.48L599.33 400.64L599.33 423.64L597.49 423.48ZM595.65 401.03L597.49 400.48L597.49 423.48L595.65 424.03ZM599.33 400.64L601.79 401.32L601.79 424.32L599.33 423.64ZM409.57 401.60L411.41 401.42L411.41 424.42L409.57 424.60ZM592.94 402.10L595.65 401.03L595.65 424.03L592.94 425.10ZM411.41 401.42L413.27 401.95L413.27 424.95L411.41 424.42ZM601.79 401.32L604.52 402.30L604.52 425.30L601.79 424.32ZM407.13 402.30L409.57 401.60L409.57 424.60L407.13 425.30ZM413.27 401.95L416.01 402.99L416.01 425.99L413.27 424.95ZM590.20 403.14L592.94 402.10L592.94 425.10L590.20 426.14ZM404.43 403.31L407.13 402.30L407.13 425.30L404.43 426.31ZM604.52 402.30L608.62 404.13L608.62 427.13L604.52 425.30ZM416.01 402.99L418.78 404.00L418.78 427.00L416.01 425.99ZM588.62 403.92L590.20 403.14L590.20 426.14L588.62 426.92ZM400.40 405.18L404.43 403.31L404.43 426.31L400.40 428.18ZM418.78 404.00L420.38 404.77L420.38 427.77L418.78 427.00ZM588.18 404.96L588.62 403.92L588.62 426.92L588.18 427.96ZM608.62 404.13L613.50 406.33L613.50 429.33L608.62 427.13ZM420.38 404.77L420.86 405.81L420.86 428.81L420.38 427.77ZM395.58 407.43L400.40 405.18L400.40 428.18L395.58 430.43ZM613.50 406.33L618.03 408.32L618.03 431.32L613.50 429.33ZM629.77 408.45L630.76 407.49L630.76 430.49L629.77 431.45ZM391.11 409.46L395.58 407.43L395.58 430.43L391.11 432.46ZM628.19 409.32L629.77 408.45L629.77 431.45L628.19 432.32ZM618.03 408.32L620.77 409.49L620.77 432.49L618.03 431.32ZM378.36 408.76L379.37 409.71L379.37 432.71L378.36 431.76ZM626.46 410.09L628.19 409.32L628.19 432.32L626.46 433.09ZM620.77 409.49L623.01 410.31L623.01 433.31L620.77 432.49ZM388.40 410.66L391.11 409.46L391.11 432.46L388.40 433.66ZM379.37 409.71L380.98 410.57L380.98 433.57L379.37 432.71ZM624.66 410.50L626.46 410.09L626.46 433.09L624.66 433.50ZM623.01 410.31L624.66 410.50L624.66 433.50L623.01 433.31ZM380.98 410.57L382.74 411.32L382.74 434.32L380.98 433.57ZM386.19 411.50L388.40 410.66L388.40 433.66L386.19 434.50ZM562.74 411.28L564.76 411.00L564.76 434.00L562.74 434.28ZM564.76 411.00L566.48 411.40L566.48 434.40L564.76 434.00ZM382.74 411.32L384.55 411.71L384.55 434.71L382.74 434.32ZM384.55 411.71L386.19 411.50L386.19 434.50L384.55 434.71ZM559.68 411.97L562.74 411.28L562.74 434.28L559.68 434.97ZM444.45 411.61L446.48 411.87L446.48 434.87L444.45 434.61ZM442.74 412.02L444.45 411.61L444.45 434.61L442.74 435.02ZM566.48 411.40L568.61 412.38L568.61 435.38L566.48 434.40ZM446.48 411.87L449.56 412.52L449.56 435.52L446.48 434.87ZM556.60 412.61L559.68 411.97L559.68 434.97L556.60 435.61ZM440.65 413.03L442.74 412.02L442.74 435.02L440.65 436.03ZM449.56 412.52L452.66 413.13L452.66 436.13L449.56 435.52ZM554.76 413.16L556.60 412.61L556.60 435.61L554.76 436.16ZM568.61 412.38L570.87 413.70L570.87 436.70L568.61 435.38ZM452.66 413.13L454.52 413.67L454.52 436.67L452.66 436.13ZM553.91 414.12L554.76 413.16L554.76 436.16L553.91 437.12ZM438.42 414.37L440.65 413.03L440.65 436.03L438.42 437.37ZM454.52 413.67L455.40 414.61L455.40 437.61L454.52 436.67ZM570.87 413.70L574.12 416.03L574.12 439.03L570.87 436.70ZM553.42 415.66L553.91 414.12L553.91 437.12L553.42 438.66ZM455.40 414.61L455.93 416.16L455.93 439.16L455.40 437.61ZM435.24 416.73L438.42 414.37L438.42 437.37L435.24 439.73ZM553.21 417.52L553.42 415.66L553.42 438.66L553.21 440.52ZM526.63 416.88L528.71 416.87L528.71 439.87L526.63 439.88ZM523.38 417.13L526.63 416.88L526.63 439.88L523.38 440.13ZM455.93 416.16L456.19 418.01L456.19 441.01L455.93 439.16ZM480.67 417.11L482.75 417.10L482.75 440.10L480.67 440.11ZM528.71 416.87L530.23 417.48L530.23 440.48L528.71 439.87ZM482.75 417.10L486.00 417.32L486.00 440.32L482.75 440.10ZM520.13 417.35L523.38 417.13L523.38 440.13L520.13 440.35ZM486.00 417.32L489.27 417.50L489.27 440.50L486.00 440.32ZM574.12 416.03L578.00 418.82L578.00 441.82L574.12 439.03ZM479.17 417.74L480.67 417.11L480.67 440.11L479.17 440.74ZM518.12 417.64L520.13 417.35L520.13 440.35L518.12 440.64ZM489.27 417.50L491.29 417.77L491.29 440.77L489.27 440.50ZM516.91 418.45L518.12 417.64L518.12 440.64L516.91 441.45ZM530.23 417.48L531.90 418.73L531.90 441.73L530.23 440.48ZM431.45 419.56L435.24 416.73L435.24 439.73L431.45 442.56ZM491.29 417.77L492.52 418.58L492.52 441.58L491.29 440.77ZM477.54 419.00L479.17 417.74L479.17 440.74L477.54 442.00ZM515.82 419.90L516.91 418.45L516.91 441.45L515.82 442.90ZM492.52 418.58L493.66 420.01L493.66 443.01L492.52 441.58ZM531.90 418.73L533.58 420.31L533.58 443.31L531.90 441.73ZM475.91 420.60L477.54 419.00L477.54 442.00L475.91 443.60ZM578.00 418.82L581.61 421.36L581.61 444.36L578.00 441.82ZM514.87 421.67L515.82 419.90L515.82 442.90L514.87 444.67ZM427.91 422.13L431.45 419.56L431.45 442.56L427.91 445.13ZM493.66 420.01L494.65 421.78L494.65 444.78L493.66 443.01ZM533.58 420.31L535.82 423.01L535.82 446.01L533.58 443.31ZM594.33 422.25L594.65 421.29L594.65 444.29L594.33 445.25ZM473.75 423.32L475.91 420.60L475.91 443.60L473.75 446.32ZM581.61 421.36L583.81 422.87L583.81 445.87L581.61 444.36ZM592.99 423.05L594.33 422.25L594.33 445.25L592.99 446.05ZM414.88 422.20L415.22 423.15L415.22 446.15L414.88 445.20ZM425.76 423.66L427.91 422.13L427.91 445.13L425.76 446.66ZM513.86 424.61L514.87 421.67L514.87 444.67L513.86 447.61ZM494.65 421.78L495.75 424.70L495.75 447.70L494.65 444.78ZM591.10 423.69L592.99 423.05L592.99 446.05L591.10 446.69ZM583.81 422.87L585.67 423.96L585.67 446.96L583.81 445.87ZM415.22 423.15L416.59 423.94L416.59 446.94L415.22 446.15ZM589.11 424.21L591.10 423.69L591.10 446.69L589.11 447.21ZM585.67 423.96L587.19 424.36L587.19 447.36L585.67 446.96ZM423.94 424.77L425.76 423.66L425.76 446.66L423.94 447.77ZM416.59 423.94L418.50 424.56L418.50 447.56L416.59 446.94ZM587.19 424.36L589.11 424.21L589.11 447.21L587.19 447.36ZM535.82 423.01L538.48 426.24L538.48 449.24L535.82 446.01ZM418.50 424.56L420.51 425.06L420.51 448.06L418.50 447.56ZM471.19 426.58L473.75 423.32L473.75 446.32L471.19 449.58ZM422.43 425.20L423.94 424.77L423.94 447.77L422.43 448.20ZM420.51 425.06L422.43 425.20L422.43 448.20L420.51 448.06ZM512.67 428.12L513.86 424.61L513.86 447.61L512.67 451.12ZM495.75 424.70L497.05 428.20L497.05 451.20L495.75 447.70ZM538.48 426.24L540.98 429.19L540.98 452.19L538.48 449.24ZM468.78 429.56L471.19 426.58L471.19 449.58L468.78 452.56ZM455.91 427.86L455.92 429.84L455.92 452.84L455.91 450.86ZM511.51 431.34L512.67 428.12L512.67 451.12L511.51 454.34ZM497.05 428.20L498.31 431.40L498.31 454.40L497.05 451.20ZM540.98 429.19L542.52 430.96L542.52 453.96L540.98 452.19ZM553.69 430.87L553.85 429.34L553.85 452.34L553.69 453.87ZM467.29 431.33L468.78 429.56L468.78 452.56L467.29 454.33ZM455.92 429.84L456.12 431.36L456.12 454.36L455.92 452.84ZM553.00 431.75L553.69 430.87L553.69 453.87L553.00 454.75ZM542.52 430.96L543.88 432.26L543.88 455.26L542.52 453.96ZM456.12 431.36L456.84 432.24L456.84 455.24L456.12 454.36ZM465.97 432.66L467.29 431.33L467.29 454.33L465.97 455.66ZM551.37 432.36L553.00 431.75L553.00 454.75L551.37 455.36ZM510.77 433.26L511.51 431.34L511.51 454.34L510.77 456.26ZM498.31 431.40L499.10 433.32L499.10 456.32L498.31 454.40ZM456.84 432.24L458.49 432.83L458.49 455.83L456.84 455.24ZM549.28 432.73L551.37 432.36L551.37 455.36L549.28 455.73ZM543.88 432.26L545.21 432.86L545.21 455.86L543.88 455.26ZM547.13 432.96L549.28 432.73L549.28 455.73L547.13 455.96ZM545.21 432.86L547.13 432.96L547.13 455.96L545.21 455.86ZM464.66 433.27L465.97 432.66L465.97 455.66L464.66 456.27ZM458.49 432.83L460.59 433.17L460.59 456.17L458.49 455.83ZM460.59 433.17L462.74 433.39L462.74 456.39L460.59 456.17ZM462.74 433.39L464.66 433.27L464.66 456.27L462.74 456.39ZM510.01 434.73L510.77 433.26L510.77 456.26L510.01 457.73ZM499.10 433.32L499.91 434.78L499.91 457.78L499.10 456.32ZM508.98 435.50L510.01 434.73L510.01 457.73L508.98 458.50ZM499.91 434.78L500.96 435.54L500.96 458.54L499.91 457.78ZM507.16 435.87L508.98 435.50L508.98 458.50L507.16 458.87ZM500.96 435.54L502.80 435.89L502.80 458.89L500.96 458.54ZM504.98 435.95L507.16 435.87L507.16 458.87L504.98 458.95ZM502.80 435.89L504.98 435.95L504.98 458.95L502.80 458.89Z" fill="#848484"/>
<path d="M571.44 223.95L571.58 221.83L571.58 244.83L571.44 246.95Z" fill="#565656"/>
<path d="M431.92 222.53L432.13 224.65L432.13 247.65L431.92 245.53Z" fill="#909090"/>
<path d="M571.01 225.91L571.52 223.36L571.52 246.36L571.01 248.91Z" fill="#565656"/>
<path d="M432.03 224.06L432.61 226.60L432.61 249.60L432.03 247.06Z" fill="#909090"/>
<path d="M570.29 229.16L571.13 225.32L571.13 248.32L570.29 252.16Z" fill="#565656"/>
<path d="M432.47 226.02L433.43 229.85L433.43 252.85L432.47 249.02Z" fill="#909090"/>
<path d="M569.43 232.71L570.42 228.58L570.42 251.58L569.43 255.71Z" fill="#565656"/>
<path d="M433.28 229.27L434.39 233.39L434.39 256.39L433.28 252.27Z" fill="#909090"/>
<path d="M568.74 235.67L569.57 232.13L569.57 255.13L568.74 258.67Z" fill="#555555"/>
<path d="M434.24 232.81L435.18 236.35L435.18 259.35L434.24 255.81Z" fill="#8f8f8f"/>
<path d="M609.85 235.73L610.82 233.72L610.82 256.72L609.85 258.73Z" fill="#5f5f5f"/>
<path d="M393.05 234.82L394.08 236.82L394.08 259.82L393.05 257.82Z" fill="#919191"/>
<path d="M568.68 237.54L568.83 235.08L568.83 258.08L568.68 260.54Z" fill="#494949"/>
<path d="M608.66 237.57L610.14 235.21L610.14 258.21L608.66 260.57Z" fill="#646464"/>
<path d="M435.08 235.76L435.30 238.21L435.30 261.21L435.08 258.76Z" fill="#838383"/>
<path d="M393.78 236.30L395.32 238.65L395.32 261.65L393.78 259.30Z" fill="#919191"/>
<path d="M606.66 240.65L608.98 237.07L608.98 260.07L606.66 263.65Z" fill="#656565"/>
<path d="M394.99 238.15L397.42 241.70L397.42 264.70L394.99 261.15Z" fill="#919191"/>
<path d="M604.41 243.98L606.99 240.15L606.99 263.15L604.41 266.98Z" fill="#666666"/>
<path d="M397.07 241.21L399.76 245.01L399.76 268.01L397.07 264.21Z" fill="#919191"/>
<path d="M602.55 246.77L604.75 243.48L604.75 266.48L602.55 269.77Z" fill="#656565"/>
<path d="M399.42 244.52L401.71 247.78L401.71 270.78L399.42 267.52Z" fill="#909090"/>
<path d="M601.74 248.59L602.85 246.25L602.85 269.25L601.74 271.59Z" fill="#525252"/>
<path d="M401.40 247.27L402.57 249.59L402.57 272.59L401.40 270.27Z" fill="#848484"/>
<path d="M601.38 250.16L601.95 248.03L601.95 271.03L601.38 273.16Z" fill="#424242"/>
<path d="M402.35 249.04L402.98 251.16L402.98 274.16L402.35 272.04Z" fill="#7b7b7b"/>
<path d="M643.95 251.05L644.33 249.50L644.33 272.50L643.95 274.05Z" fill="#575757"/>
<path d="M642.54 252.31L644.23 250.54L644.23 273.54L642.54 275.31Z" fill="#707070"/>
<path d="M360.02 250.94L360.44 252.47L360.44 275.47L360.02 273.94Z" fill="#909090"/>
<path d="M360.15 251.97L361.89 253.72L361.89 276.72L360.15 274.97Z" fill="#929292"/>
<path d="M640.65 253.94L642.97 251.89L642.97 274.89L640.65 276.94Z" fill="#767676"/>
<path d="M361.45 253.32L363.83 255.34L363.83 278.34L361.45 276.32Z" fill="#929292"/>
<path d="M637.48 256.67L641.10 253.55L641.10 276.55L637.48 279.67Z" fill="#777777"/>
<path d="M363.37 254.95L367.08 258.03L367.08 281.03L363.37 277.95Z" fill="#929292"/>
<path d="M633.96 259.61L637.94 256.28L637.94 279.28L633.96 282.61Z" fill="#787878"/>
<path d="M366.62 257.65L370.68 260.94L370.68 283.94L366.62 280.65Z" fill="#929292"/>
<path d="M631.04 262.08L634.42 259.22L634.42 282.22L631.04 285.08Z" fill="#777777"/>
<path d="M370.22 260.56L373.68 263.38L373.68 286.38L370.22 283.56Z" fill="#919191"/>
<path d="M629.52 263.74L631.48 261.67L631.48 284.67L629.52 286.74Z" fill="#636363"/>
<path d="M373.24 262.97L375.25 265.02L375.25 288.02L373.24 285.97Z" fill="#858585"/>
<path d="M628.53 265.22L629.90 263.27L629.90 286.27L628.53 288.22Z" fill="#525252"/>
<path d="M628.50 266.34L628.75 264.68L628.75 287.68L628.50 289.34Z" fill="#3e3e3e"/>
<path d="M374.86 264.56L376.28 266.49L376.28 289.49L374.86 287.56Z" fill="#7c7c7c"/>
<path d="M376.05 265.96L376.36 267.61L376.36 290.61L376.05 288.96Z" fill="#787878"/>
<path d="M669.60 271.76L670.56 270.36L670.56 293.36L669.60 294.76Z" fill="#676767"/>
<path d="M667.74 272.80L670.03 271.35L670.03 294.35L667.74 295.80Z" fill="#828282"/>
<path d="M334.43 272.05L335.42 273.44L335.42 296.44L334.43 295.05Z" fill="#919191"/>
<path d="M665.26 274.14L668.26 272.50L668.26 295.50L665.26 297.14Z" fill="#888888"/>
<path d="M334.99 273.04L337.31 274.47L337.31 297.47L334.99 296.04Z" fill="#929292"/>
<path d="M336.79 274.17L339.84 275.78L339.84 298.78L336.79 297.17Z" fill="#929292"/>
<path d="M661.08 276.37L665.78 273.86L665.78 296.86L661.08 299.37Z" fill="#888888"/>
<path d="M339.31 275.50L344.08 277.97L344.08 300.97L339.31 298.50Z" fill="#929292"/>
<path d="M656.49 278.77L661.61 276.09L661.61 299.09L656.49 301.77Z" fill="#888888"/>
<path d="M343.54 277.69L348.74 280.32L348.74 303.32L343.54 300.69Z" fill="#929292"/>
<path d="M652.66 280.78L657.02 278.49L657.02 301.49L652.66 303.78Z" fill="#878787"/>
<path d="M348.21 280.05L352.63 282.29L352.63 305.29L348.21 303.05Z" fill="#919191"/>
<path d="M650.52 282.18L653.17 280.48L653.17 303.48L650.52 305.18Z" fill="#757575"/>
<path d="M648.96 283.50L651.00 281.83L651.00 304.83L648.96 306.50Z" fill="#646464"/>
<path d="M352.11 282.00L354.81 283.68L354.81 306.68L352.11 305.00Z" fill="#858585"/>
<path d="M648.46 284.59L649.34 283.05L649.34 306.05L648.46 307.59Z" fill="#4b4b4b"/>
<path d="M354.32 283.33L356.41 284.97L356.41 307.97L354.32 306.33Z" fill="#7d7d7d"/>
<path d="M356.02 284.53L356.95 286.05L356.95 309.05L356.02 307.53Z" fill="#797979"/>
<path d="M687.49 294.64L687.59 292.92L687.59 315.92L687.49 317.64Z" fill="#565656"/>
<path d="M686.32 295.33L687.74 294.14L687.74 317.14L686.32 318.33Z" fill="#787878"/>
<path d="M684.09 296.11L686.83 295.02L686.83 318.02L684.09 319.11Z" fill="#8a8a8a"/>
<path d="M318.08 294.78L318.23 296.50L318.23 319.50L318.08 317.78Z" fill="#909090"/>
<path d="M681.13 297.09L684.65 295.90L684.65 318.90L681.13 320.09Z" fill="#8a8a8a"/>
<path d="M317.97 296.01L319.42 297.17L319.42 320.17L317.97 319.01Z" fill="#929292"/>
<path d="M318.90 296.88L321.67 297.94L321.67 320.94L318.90 319.88Z" fill="#929292"/>
<path d="M676.18 298.70L681.70 296.90L681.70 319.90L676.18 321.70Z" fill="#8a8a8a"/>
<path d="M321.10 297.74L324.66 298.88L324.66 321.88L321.10 320.74Z" fill="#929292"/>
<path d="M670.75 300.42L676.75 298.51L676.75 321.51L670.75 323.42Z" fill="#8b8b8b"/>
<path d="M324.09 298.70L329.65 300.44L329.65 323.44L324.09 321.70Z" fill="#929292"/>
<path d="M666.22 301.87L671.32 300.24L671.32 323.24L666.22 324.87Z" fill="#8a8a8a"/>
<path d="M329.08 300.27L335.13 302.11L335.13 325.11L329.08 323.27Z" fill="#919191"/>
<path d="M663.58 302.94L666.79 301.66L666.79 324.66L663.58 325.94Z" fill="#7d7d7d"/>
<path d="M334.56 301.94L339.71 303.51L339.71 326.51L334.56 324.94Z" fill="#909090"/>
<path d="M661.55 304.01L664.13 302.70L664.13 325.70L661.55 327.01Z" fill="#737373"/>
<path d="M339.14 303.32L342.38 304.56L342.38 327.56L339.14 326.32Z" fill="#858585"/>
<path d="M660.62 304.99L662.04 303.67L662.04 326.67L660.62 327.99Z" fill="#5c5c5c"/>
<path d="M341.83 304.32L344.44 305.61L344.44 328.61L341.83 327.32Z" fill="#7d7d7d"/>
<path d="M343.95 305.27L345.40 306.58L345.40 329.58L343.95 328.27Z" fill="#7a7a7a"/>
<path d="M694.57 319.98L695.33 318.36L695.33 341.36L694.57 342.98Z" fill="#5f5f5f"/>
<path d="M311.23 319.01L311.24 320.87L311.24 343.87L311.23 342.01Z" fill="#8f8f8f"/>
<path d="M693.18 320.50L694.96 319.57L694.96 342.57L693.18 343.50Z" fill="#888888"/>
<path d="M690.69 320.98L693.74 320.29L693.74 343.29L690.69 343.98Z" fill="#8c8c8c"/>
<path d="M311.11 320.30L311.91 321.91L311.91 344.91L311.11 343.30Z" fill="#919191"/>
<path d="M687.42 321.53L691.27 320.86L691.27 343.86L687.42 344.53Z" fill="#8d8d8d"/>
<path d="M681.96 322.44L688.01 321.43L688.01 344.43L681.96 345.44Z" fill="#8d8d8d"/>
<path d="M311.51 321.51L313.32 322.41L313.32 345.41L311.51 344.51Z" fill="#929292"/>
<path d="M312.76 322.22L315.83 322.87L315.83 345.87L312.76 345.22Z" fill="#919191"/>
<path d="M675.99 323.39L682.55 322.35L682.55 345.35L675.99 346.39Z" fill="#8d8d8d"/>
<path d="M315.24 322.76L319.11 323.39L319.11 346.39L315.24 345.76Z" fill="#919191"/>
<path d="M671.00 324.20L676.58 323.30L676.58 346.30L671.00 347.20Z" fill="#8c8c8c"/>
<path d="M318.52 323.30L324.60 324.24L324.60 347.24L318.52 346.30Z" fill="#919191"/>
<path d="M668.01 324.89L671.59 324.08L671.59 347.08L668.01 347.89Z" fill="#7f7f7f"/>
<path d="M324.01 324.15L330.60 325.14L330.60 348.14L324.01 347.15Z" fill="#919191"/>
<path d="M665.61 325.65L668.59 324.74L668.59 347.74L665.61 348.65Z" fill="#767676"/>
<path d="M330.00 325.05L335.61 325.89L335.61 348.89L330.00 348.05Z" fill="#909090"/>
<path d="M664.32 326.47L666.15 325.42L666.15 348.42L664.32 349.47Z" fill="#6e6e6e"/>
<path d="M335.02 325.78L338.62 326.56L338.62 349.56L335.02 348.78Z" fill="#848484"/>
<path d="M338.04 326.41L341.04 327.29L341.04 350.29L338.04 349.41Z" fill="#7c7c7c"/>
<path d="M664.15 327.79L664.66 326.04L664.66 349.04L664.15 350.79Z" fill="#585858"/>
<path d="M340.49 327.06L342.35 328.10L342.35 351.10L340.49 350.06Z" fill="#7a7a7a"/>
<path d="M664.08 329.70L664.25 327.21L664.25 350.21L664.08 352.70Z" fill="#565656"/>
<path d="M342.00 327.67L342.57 329.41L342.57 352.41L342.00 350.67Z" fill="#909090"/>
<path d="M342.45 328.83L342.69 331.32L342.69 354.32L342.45 351.83Z" fill="#909090"/>
<path d="M663.88 331.59L664.13 329.10L664.13 352.10L663.88 354.59Z" fill="#565656"/>
<path d="M342.62 330.72L342.95 333.21L342.95 356.21L342.62 353.72Z" fill="#909090"/>
<path d="M692.90 343.44L693.27 341.60L693.27 364.60L692.90 366.44Z" fill="#565656"/>
<path d="M692.38 344.66L693.07 342.86L693.07 365.86L692.38 367.66Z" fill="#5c5c5c"/>
<path d="M313.87 343.51L314.29 345.35L314.29 368.35L313.87 366.51Z" fill="#909090"/>
<path d="M691.36 345.58L692.70 344.16L692.70 367.16L691.36 368.58Z" fill="#707070"/>
<path d="M689.80 345.92L691.85 345.27L691.85 368.27L689.80 368.92Z" fill="#8b8b8b"/>
<path d="M314.11 344.78L314.84 346.56L314.84 369.56L314.11 367.78Z" fill="#919191"/>
<path d="M687.17 346.06L690.39 345.80L690.39 368.80L687.17 369.06Z" fill="#8e8e8e"/>
<path d="M683.76 346.16L687.77 346.02L687.77 369.02L683.76 369.16Z" fill="#8e8e8e"/>
<path d="M678.09 346.32L684.36 346.14L684.36 369.14L678.09 369.32Z" fill="#8f8f8f"/>
<path d="M671.90 346.45L678.69 346.30L678.69 369.30L671.90 369.45Z" fill="#8f8f8f"/>
<path d="M666.73 346.57L672.50 346.44L672.50 369.44L666.73 369.57Z" fill="#8e8e8e"/>
<path d="M663.54 346.85L667.33 346.54L667.33 369.54L663.54 369.85Z" fill="#818181"/>
<path d="M314.52 346.07L315.89 347.47L315.89 370.47L314.52 369.07Z" fill="#929292"/>
<path d="M660.91 347.26L664.14 346.78L664.14 369.78L660.91 370.26Z" fill="#787878"/>
<path d="M315.39 347.17L317.46 347.79L317.46 370.79L315.39 370.17Z" fill="#919191"/>
<path d="M659.34 347.88L661.49 347.12L661.49 370.12L659.34 370.88Z" fill="#727272"/>
<path d="M316.87 347.69L320.10 347.91L320.10 370.91L316.87 370.69Z" fill="#909090"/>
<path d="M319.50 347.88L323.51 347.98L323.51 370.98L319.50 370.88Z" fill="#8f8f8f"/>
<path d="M322.91 347.97L329.19 348.08L329.19 371.08L322.91 370.97Z" fill="#8f8f8f"/>
<path d="M328.59 348.07L335.38 348.15L335.38 371.15L328.59 371.07Z" fill="#8f8f8f"/>
<path d="M334.78 348.14L340.55 348.21L340.55 371.21L334.78 371.14Z" fill="#8e8e8e"/>
<path d="M339.96 348.19L343.75 348.46L343.75 371.46L339.96 371.19Z" fill="#838383"/>
<path d="M658.64 349.13L659.80 347.54L659.80 370.54L658.64 372.13Z" fill="#686868"/>
<path d="M343.15 348.40L346.39 348.85L346.39 371.85L343.15 371.40Z" fill="#7b7b7b"/>
<path d="M345.81 348.71L347.98 349.45L347.98 372.45L345.81 371.71Z" fill="#7a7a7a"/>
<path d="M657.80 350.98L658.94 348.61L658.94 371.61L657.80 373.98Z" fill="#5f5f5f"/>
<path d="M347.51 349.12L348.72 350.69L348.72 373.69L347.51 372.12Z" fill="#919191"/>
<path d="M348.40 350.18L349.61 352.53L349.61 375.53L348.40 373.18Z" fill="#919191"/>
<path d="M656.85 352.79L658.07 350.44L658.07 373.44L656.85 375.79Z" fill="#616161"/>
<path d="M656.57 354.00L657.07 352.24L657.07 375.24L656.57 377.00Z" fill="#585858"/>
<path d="M349.33 352.00L350.62 354.33L350.62 377.33L349.33 375.00Z" fill="#919191"/>
<path d="M350.38 353.78L350.94 355.54L350.94 378.54L350.38 376.78Z" fill="#909090"/>
<path d="M681.24 367.04L681.44 365.33L681.44 388.33L681.24 390.04Z" fill="#565656"/>
<path d="M680.37 368.19L681.43 366.49L681.43 389.49L680.37 391.19Z" fill="#656565"/>
<path d="M647.71 367.67L651.03 367.62L651.03 390.62L647.71 390.67Z" fill="#7a7a7a"/>
<path d="M650.43 367.61L654.23 367.81L654.23 390.81L650.43 390.61Z" fill="#838383"/>
<path d="M645.95 368.05L648.30 367.61L648.30 390.61L645.95 391.05Z" fill="#747474"/>
<path d="M326.41 367.12L326.66 368.83L326.66 391.83L326.41 390.12Z" fill="#909090"/>
<path d="M653.63 367.76L659.31 368.41L659.31 391.41L653.63 390.76Z" fill="#8f8f8f"/>
<path d="M644.78 369.15L646.48 367.81L646.48 390.81L644.78 392.15Z" fill="#7a7a7a"/>
<path d="M679.39 369.30L680.72 367.70L680.72 390.70L679.39 392.30Z" fill="#6c6c6c"/>
<path d="M658.71 368.34L665.38 369.10L665.38 392.10L658.71 391.34Z" fill="#909090"/>
<path d="M356.89 369.11L360.21 369.12L360.21 392.12L356.89 392.11Z" fill="#7a7a7a"/>
<path d="M326.45 368.28L327.56 369.96L327.56 392.96L326.45 391.28Z" fill="#919191"/>
<path d="M353.69 369.33L357.49 369.09L357.49 392.09L353.69 392.33Z" fill="#818181"/>
<path d="M359.62 369.06L361.98 369.49L361.98 392.49L359.62 392.06Z" fill="#797979"/>
<path d="M664.79 369.04L670.97 369.70L670.97 392.70L664.79 392.04Z" fill="#909090"/>
<path d="M678.04 370.07L679.83 368.91L679.83 391.91L678.04 393.07Z" fill="#828282"/>
<path d="M348.63 369.97L354.29 369.27L354.29 392.27L348.63 392.97Z" fill="#8c8c8c"/>
<path d="M643.22 370.84L645.22 368.75L645.22 391.75L643.22 393.84Z" fill="#707070"/>
<path d="M670.37 369.64L674.33 370.04L674.33 393.04L670.37 392.64Z" fill="#909090"/>
<path d="M361.45 369.25L363.18 370.57L363.18 393.57L361.45 392.25Z" fill="#929292"/>
<path d="M676.37 370.20L678.59 369.86L678.59 392.86L676.37 393.20Z" fill="#8d8d8d"/>
<path d="M673.74 369.99L676.97 370.17L676.97 393.17L673.74 392.99Z" fill="#909090"/>
<path d="M327.20 369.49L328.58 371.07L328.58 394.07L327.20 392.49Z" fill="#929292"/>
<path d="M342.58 370.73L349.23 369.90L349.23 392.90L342.58 393.73Z" fill="#8d8d8d"/>
<path d="M337.01 371.39L343.17 370.66L343.17 393.66L337.01 394.39Z" fill="#8d8d8d"/>
<path d="M362.73 370.18L364.79 372.24L364.79 395.24L362.73 393.18Z" fill="#929292"/>
<path d="M328.13 370.68L329.95 371.82L329.95 394.82L328.13 393.68Z" fill="#929292"/>
<path d="M641.57 372.48L643.64 370.41L643.64 393.41L641.57 395.48Z" fill="#727272"/>
<path d="M333.66 371.76L337.61 371.32L337.61 394.32L333.66 394.76Z" fill="#8d8d8d"/>
<path d="M329.40 371.62L331.63 371.94L331.63 394.94L329.40 394.62Z" fill="#909090"/>
<path d="M331.03 371.92L334.25 371.71L334.25 394.71L331.03 394.92Z" fill="#8e8e8e"/>
<path d="M640.81 373.61L641.96 372.02L641.96 395.02L640.81 396.61Z" fill="#686868"/>
<path d="M364.36 371.82L366.49 373.86L366.49 396.86L364.36 394.82Z" fill="#929292"/>
<path d="M366.09 373.41L367.29 374.99L367.29 397.99L366.09 396.41Z" fill="#919191"/>
<path d="M624.85 385.90L627.30 385.78L627.30 408.78L624.85 408.90Z" fill="#767676"/>
<path d="M626.71 385.76L629.96 386.16L629.96 409.16L626.71 408.76Z" fill="#7b7b7b"/>
<path d="M623.30 386.80L625.42 385.76L625.42 408.76L623.30 409.80Z" fill="#898989"/>
<path d="M629.37 386.07L633.01 386.78L633.01 409.78L629.37 409.07Z" fill="#848484"/>
<path d="M381.16 387.02L383.61 387.12L383.61 410.12L381.16 410.02Z" fill="#777777"/>
<path d="M378.51 387.43L381.75 386.99L381.75 409.99L378.51 410.43Z" fill="#787878"/>
<path d="M632.42 386.64L637.72 388.03L637.72 411.03L632.42 409.64Z" fill="#909090"/>
<path d="M621.11 388.23L623.82 386.50L623.82 409.50L621.11 411.23Z" fill="#828282"/>
<path d="M383.04 386.98L385.19 388.00L385.19 411.00L383.04 409.98Z" fill="#929292"/>
<path d="M375.48 388.07L379.10 387.33L379.10 410.33L375.48 411.07Z" fill="#7f7f7f"/>
<path d="M384.66 387.71L387.42 389.41L387.42 412.41L384.66 410.71Z" fill="#929292"/>
<path d="M370.81 389.38L376.06 387.93L376.06 410.93L370.81 412.38Z" fill="#8a8a8a"/>
<path d="M637.14 387.88L643.35 389.52L643.35 412.52L637.14 410.88Z" fill="#919191"/>
<path d="M618.86 389.60L621.62 387.91L621.62 410.91L618.86 412.60Z" fill="#848484"/>
<path d="M659.60 389.60L660.46 388.00L660.46 411.00L659.60 412.60Z" fill="#616161"/>
<path d="M658.32 390.59L659.97 389.14L659.97 412.14L658.32 413.59Z" fill="#767676"/>
<path d="M386.90 389.10L389.71 390.75L389.71 413.75L386.90 412.10Z" fill="#929292"/>
<path d="M617.66 390.60L619.35 389.26L619.35 412.26L617.66 413.60Z" fill="#7a7a7a"/>
<path d="M365.22 390.92L371.39 389.22L371.39 412.22L365.22 413.92Z" fill="#8b8b8b"/>
<path d="M642.77 389.37L648.55 390.85L648.55 413.85L642.77 412.37Z" fill="#919191"/>
<path d="M348.08 389.58L348.98 391.17L348.98 414.17L348.08 412.58Z" fill="#919191"/>
<path d="M656.92 391.55L658.79 390.22L658.79 413.22L656.92 414.55Z" fill="#7e7e7e"/>
<path d="M617.87 391.79L617.90 390.11L617.90 413.11L617.87 414.79Z" fill="#3e3e3e"/>
<path d="M389.22 390.42L390.94 391.74L390.94 414.74L389.22 413.42Z" fill="#929292"/>
<path d="M647.97 390.70L651.69 391.62L651.69 414.62L647.97 413.70Z" fill="#919191"/>
<path d="M348.60 390.71L350.29 392.14L350.29 415.14L348.60 413.71Z" fill="#929292"/>
<path d="M360.07 392.30L365.80 390.76L365.80 413.76L360.07 415.30Z" fill="#8b8b8b"/>
<path d="M655.30 392.12L657.45 391.26L657.45 414.26L655.30 415.12Z" fill="#8a8a8a"/>
<path d="M651.10 391.49L654.19 392.10L654.19 415.10L651.10 414.49Z" fill="#919191"/>
<path d="M653.60 392.05L655.88 392.01L655.88 415.01L653.60 415.05Z" fill="#8f8f8f"/>
<path d="M390.69 391.26L390.77 392.93L390.77 415.93L390.69 414.26Z" fill="#777777"/>
<path d="M349.81 391.78L351.71 393.08L351.71 416.08L349.81 414.78Z" fill="#929292"/>
<path d="M356.95 393.11L360.65 392.15L360.65 415.15L356.95 416.11Z" fill="#8b8b8b"/>
<path d="M351.19 392.81L353.35 393.65L353.35 416.65L351.19 415.81Z" fill="#929292"/>
<path d="M354.46 393.61L357.54 392.97L357.54 415.97L354.46 416.61Z" fill="#8c8c8c"/>
<path d="M352.78 393.54L355.06 393.56L355.06 416.56L352.78 416.54Z" fill="#8f8f8f"/>
<path d="M597.19 400.46L599.63 400.67L599.63 423.67L597.19 423.46Z" fill="#787878"/>
<path d="M595.36 401.11L597.78 400.40L597.78 423.40L595.36 424.11Z" fill="#8b8b8b"/>
<path d="M599.04 400.56L602.08 401.39L602.08 424.39L599.04 423.56Z" fill="#7c7c7c"/>
<path d="M409.27 401.63L411.70 401.39L411.70 424.39L409.27 424.63Z" fill="#767676"/>
<path d="M592.66 402.21L595.92 400.92L595.92 423.92L592.66 425.21Z" fill="#8a8a8a"/>
<path d="M411.12 401.34L413.56 402.03L413.56 425.03L411.12 424.34Z" fill="#919191"/>
<path d="M601.51 401.21L604.80 402.40L604.80 425.40L601.51 424.21Z" fill="#858585"/>
<path d="M406.84 402.38L409.86 401.51L409.86 424.51L406.84 425.38Z" fill="#767676"/>
<path d="M412.99 401.84L416.29 403.10L416.29 426.10L412.99 424.84Z" fill="#929292"/>
<path d="M589.92 403.24L593.22 401.99L593.22 424.99L589.92 426.24Z" fill="#8a8a8a"/>
<path d="M404.15 403.41L407.41 402.19L407.41 425.19L404.15 426.41Z" fill="#7d7d7d"/>
<path d="M604.25 402.18L608.89 404.25L608.89 427.25L604.25 425.18Z" fill="#919191"/>
<path d="M415.72 402.89L419.06 404.11L419.06 427.11L415.72 425.89Z" fill="#929292"/>
<path d="M588.36 404.05L590.47 403.01L590.47 426.01L588.36 427.05Z" fill="#898989"/>
<path d="M400.12 405.31L404.71 403.18L404.71 426.18L400.12 428.31Z" fill="#888888"/>
<path d="M418.51 403.87L420.65 404.90L420.65 427.90L418.51 426.87Z" fill="#929292"/>
<path d="M588.06 405.24L588.74 403.64L588.74 426.64L588.06 428.24Z" fill="#454545"/>
<path d="M608.34 404.01L613.78 406.45L613.78 429.45L608.34 427.01Z" fill="#929292"/>
<path d="M420.25 404.50L420.98 406.08L420.98 429.08L420.25 427.50Z" fill="#797979"/>
<path d="M395.30 407.56L400.67 405.05L400.67 428.05L395.30 430.56Z" fill="#898989"/>
<path d="M613.23 406.21L618.30 408.44L618.30 431.44L613.23 429.21Z" fill="#929292"/>
<path d="M629.56 408.66L630.97 407.28L630.97 430.28L629.56 431.66Z" fill="#727272"/>
<path d="M390.84 409.58L395.85 407.30L395.85 430.30L390.84 432.58Z" fill="#898989"/>
<path d="M627.93 409.46L630.04 408.31L630.04 431.31L627.93 432.46Z" fill="#888888"/>
<path d="M617.75 408.20L621.05 409.61L621.05 432.61L617.75 431.20Z" fill="#929292"/>
<path d="M378.14 408.55L379.59 409.92L379.59 432.92L378.14 431.55Z" fill="#929292"/>
<path d="M626.18 410.21L628.46 409.20L628.46 432.20L626.18 433.21Z" fill="#898989"/>
<path d="M620.49 409.39L623.29 410.41L623.29 433.41L620.49 432.39Z" fill="#929292"/>
<path d="M388.13 410.78L391.39 409.34L391.39 432.34L388.13 433.78Z" fill="#898989"/>
<path d="M379.11 409.57L381.25 410.71L381.25 433.71L379.11 432.57Z" fill="#929292"/>
<path d="M624.36 410.57L626.75 410.02L626.75 433.02L624.36 433.57Z" fill="#8c8c8c"/>
<path d="M622.71 410.27L624.95 410.53L624.95 433.53L622.71 433.27Z" fill="#909090"/>
<path d="M380.71 410.45L383.01 411.44L383.01 434.44L380.71 433.45Z" fill="#929292"/>
<path d="M385.91 411.61L388.68 410.56L388.68 433.56L385.91 434.61Z" fill="#8a8a8a"/>
<path d="M562.45 411.33L565.06 410.96L565.06 433.96L562.45 434.33Z" fill="#8d8d8d"/>
<path d="M564.47 410.93L566.78 411.46L566.78 434.46L564.47 433.93Z" fill="#797979"/>
<path d="M382.44 411.25L384.84 411.77L384.84 434.77L382.44 434.25Z" fill="#919191"/>
<path d="M384.25 411.75L386.49 411.46L386.49 434.46L384.25 434.75Z" fill="#8d8d8d"/>
<path d="M559.39 412.03L563.04 411.22L563.04 434.22L559.39 435.03Z" fill="#8c8c8c"/>
<path d="M444.16 411.57L446.78 411.91L446.78 434.91L444.16 434.57Z" fill="#909090"/>
<path d="M442.45 412.09L444.75 411.53L444.75 434.53L442.45 435.09Z" fill="#747474"/>
<path d="M566.21 411.27L568.88 412.51L568.88 435.51L566.21 434.27Z" fill="#7d7d7d"/>
<path d="M446.18 411.81L449.85 412.58L449.85 435.58L446.18 434.81Z" fill="#919191"/>
<path d="M556.31 412.67L559.98 411.90L559.98 434.90L556.31 435.67Z" fill="#8c8c8c"/>
<path d="M440.37 413.16L443.01 411.89L443.01 434.89L440.37 436.16Z" fill="#747474"/>
<path d="M449.26 412.46L452.95 413.19L452.95 436.19L449.26 435.46Z" fill="#919191"/>
<path d="M554.47 413.25L556.89 412.52L556.89 435.52L554.47 436.25Z" fill="#8b8b8b"/>
<path d="M568.35 412.23L571.13 413.85L571.13 436.85L568.35 435.23Z" fill="#858585"/>
<path d="M452.37 413.05L454.81 413.75L454.81 436.75L452.37 436.05Z" fill="#919191"/>
<path d="M553.71 414.34L554.96 412.94L554.96 435.94L553.71 437.34Z" fill="#565656"/>
<path d="M438.17 414.53L440.90 412.87L440.90 435.87L438.17 437.53Z" fill="#777777"/>
<path d="M454.31 413.45L455.60 414.83L455.60 437.83L454.31 436.45Z" fill="#7a7a7a"/>
<path d="M570.63 413.53L574.37 416.20L574.37 439.20L570.63 436.53Z" fill="#919191"/>
<path d="M553.33 415.95L554.00 413.83L554.00 436.83L553.33 438.95Z" fill="#444444"/>
<path d="M455.30 414.33L456.03 416.44L456.03 439.44L455.30 437.33Z" fill="#7b7b7b"/>
<path d="M435.00 416.91L438.66 414.19L438.66 437.19L435.00 439.91Z" fill="#7b7b7b"/>
<path d="M553.18 417.82L553.45 415.37L553.45 438.37L553.18 440.82Z" fill="#494949"/>
<path d="M526.33 416.88L529.01 416.87L529.01 439.87L526.33 439.88Z" fill="#8f8f8f"/>
<path d="M523.09 417.15L526.93 416.85L526.93 439.85L523.09 440.15Z" fill="#8e8e8e"/>
<path d="M455.89 415.86L456.24 418.31L456.24 441.31L455.89 438.86Z" fill="#838383"/>
<path d="M480.37 417.11L483.05 417.09L483.05 440.09L480.37 440.11Z" fill="#8f8f8f"/>
<path d="M528.43 416.75L530.51 417.60L530.51 440.60L528.43 439.75Z" fill="#7a7a7a"/>
<path d="M482.45 417.08L486.30 417.34L486.30 440.34L482.45 440.08Z" fill="#909090"/>
<path d="M519.83 417.37L523.68 417.11L523.68 440.11L519.83 440.37Z" fill="#8e8e8e"/>
<path d="M485.70 417.30L489.57 417.52L489.57 440.52L485.70 440.30Z" fill="#909090"/>
<path d="M573.88 415.86L578.25 419.00L578.25 442.00L573.88 438.86Z" fill="#929292"/>
<path d="M478.90 417.86L480.95 416.99L480.95 439.99L478.90 440.86Z" fill="#717171"/>
<path d="M517.82 417.68L520.43 417.31L520.43 440.31L517.82 440.68Z" fill="#8d8d8d"/>
<path d="M488.97 417.46L491.59 417.81L491.59 440.81L488.97 440.46Z" fill="#909090"/>
<path d="M516.66 418.62L518.36 417.47L518.36 440.47L516.66 441.62Z" fill="#686868"/>
<path d="M529.99 417.31L532.15 418.90L532.15 441.90L529.99 440.31Z" fill="#7d7d7d"/>
<path d="M431.21 419.74L435.48 416.55L435.48 439.55L431.21 442.74Z" fill="#7c7c7c"/>
<path d="M491.04 417.61L492.78 418.74L492.78 441.74L491.04 440.61Z" fill="#7a7a7a"/>
<path d="M477.30 419.18L479.41 417.56L479.41 440.56L477.30 442.18Z" fill="#666666"/>
<path d="M515.63 420.13L517.09 418.21L517.09 441.21L515.63 443.13Z" fill="#545454"/>
<path d="M492.34 418.34L493.84 420.24L493.84 443.24L492.34 441.34Z" fill="#7c7c7c"/>
<path d="M531.69 418.52L533.80 420.52L533.80 443.52L531.69 441.52Z" fill="#858585"/>
<path d="M475.70 420.82L477.75 418.79L477.75 441.79L475.70 443.82Z" fill="#656565"/>
<path d="M577.76 418.65L581.86 421.53L581.86 444.53L577.76 441.65Z" fill="#929292"/>
<path d="M514.73 421.94L515.96 419.63L515.96 442.63L514.73 444.94Z" fill="#545454"/>
<path d="M427.67 422.31L431.69 419.38L431.69 442.38L427.67 445.31Z" fill="#7d7d7d"/>
<path d="M493.51 419.75L494.80 422.04L494.80 445.04L493.51 442.75Z" fill="#848484"/>
<path d="M533.39 420.08L536.01 423.24L536.01 446.24L533.39 443.08Z" fill="#919191"/>
<path d="M594.24 422.53L594.74 421.01L594.74 444.01L594.24 445.53Z" fill="#5a5a5a"/>
<path d="M473.57 423.56L476.10 420.37L476.10 443.37L473.57 446.56Z" fill="#6a6a6a"/>
<path d="M581.37 421.19L584.06 423.04L584.06 446.04L581.37 444.19Z" fill="#929292"/>
<path d="M592.73 423.21L594.59 422.09L594.59 445.09L592.73 446.21Z" fill="#858585"/>
<path d="M414.78 421.92L415.33 423.43L415.33 446.43L414.78 444.92Z" fill="#909090"/>
<path d="M425.51 423.84L428.16 421.96L428.16 444.96L425.51 446.84Z" fill="#7e7e7e"/>
<path d="M513.76 424.89L514.97 421.39L514.97 444.39L513.76 447.89Z" fill="#595959"/>
<path d="M494.55 421.49L495.86 424.98L495.86 447.98L494.55 444.49Z" fill="#909090"/>
<path d="M590.82 423.78L593.27 422.96L593.27 445.96L590.82 446.78Z" fill="#8a8a8a"/>
<path d="M583.56 422.71L585.92 424.11L585.92 447.11L583.56 445.71Z" fill="#929292"/>
<path d="M414.97 423.00L416.85 424.09L416.85 447.09L414.97 446.00Z" fill="#929292"/>
<path d="M588.82 424.28L591.39 423.61L591.39 446.61L588.82 447.28Z" fill="#8b8b8b"/>
<path d="M585.38 423.88L587.48 424.44L587.48 447.44L585.38 446.88Z" fill="#919191"/>
<path d="M423.68 424.93L426.01 423.51L426.01 446.51L423.68 447.93Z" fill="#848484"/>
<path d="M416.31 423.85L418.78 424.65L418.78 447.65L416.31 446.85Z" fill="#929292"/>
<path d="M586.89 424.39L589.41 424.18L589.41 447.18L586.89 447.39Z" fill="#8e8e8e"/>
<path d="M535.63 422.78L538.67 426.48L538.67 449.48L535.63 445.78Z" fill="#919191"/>
<path d="M418.21 424.49L420.80 425.13L420.80 448.13L418.21 447.49Z" fill="#919191"/>
<path d="M471.01 426.82L473.94 423.09L473.94 446.09L471.01 449.82Z" fill="#6a6a6a"/>
<path d="M422.14 425.28L424.23 424.69L424.23 447.69L422.14 448.28Z" fill="#8b8b8b"/>
<path d="M420.21 425.03L422.73 425.22L422.73 448.22L420.21 448.03Z" fill="#909090"/>
<path d="M512.57 428.40L513.96 424.32L513.96 447.32L512.57 451.40Z" fill="#5a5a5a"/>
<path d="M495.65 424.42L497.16 428.48L497.16 451.48L495.65 447.42Z" fill="#919191"/>
<path d="M538.28 426.02L541.17 429.42L541.17 452.42L538.28 449.02Z" fill="#929292"/>
<path d="M468.59 429.79L471.38 426.35L471.38 449.35L468.59 452.79Z" fill="#6b6b6b"/>
<path d="M455.91 427.56L455.92 430.14L455.92 453.14L455.91 450.56Z" fill="#8f8f8f"/>
<path d="M511.41 431.62L512.77 427.84L512.77 450.84L511.41 454.62Z" fill="#5b5b5b"/>
<path d="M496.94 427.92L498.42 431.68L498.42 454.68L496.94 450.92Z" fill="#919191"/>
<path d="M540.78 428.97L542.71 431.18L542.71 454.18L540.78 451.97Z" fill="#929292"/>
<path d="M553.65 431.17L553.88 429.04L553.88 452.04L553.65 454.17Z" fill="#565656"/>
<path d="M467.10 431.56L468.97 429.33L468.97 452.33L467.10 454.56Z" fill="#6c6c6c"/>
<path d="M455.88 429.54L456.16 431.66L456.16 454.66L455.88 452.54Z" fill="#909090"/>
<path d="M552.81 431.99L553.87 430.63L553.87 453.63L552.81 454.99Z" fill="#6a6a6a"/>
<path d="M542.30 430.75L544.10 432.47L544.10 455.47L542.30 453.75Z" fill="#929292"/>
<path d="M455.94 431.13L457.03 432.47L457.03 455.47L455.94 454.13Z" fill="#919191"/>
<path d="M465.76 432.87L467.51 431.12L467.51 454.12L465.76 455.87Z" fill="#727272"/>
<path d="M551.09 432.47L553.28 431.65L553.28 454.65L551.09 455.47Z" fill="#8a8a8a"/>
<path d="M510.66 433.54L511.62 431.06L511.62 454.06L510.66 456.54Z" fill="#5c5c5c"/>
<path d="M498.19 431.12L499.22 433.60L499.22 456.60L498.19 454.12Z" fill="#919191"/>
<path d="M456.56 432.14L458.77 432.93L458.77 455.93L456.56 455.14Z" fill="#929292"/>
<path d="M548.98 432.78L551.66 432.31L551.66 455.31L548.98 455.78Z" fill="#8d8d8d"/>
<path d="M543.61 432.14L545.48 432.99L545.48 455.99L543.61 455.14Z" fill="#929292"/>
<path d="M546.84 433.00L549.58 432.69L549.58 455.69L546.84 456.00Z" fill="#8d8d8d"/>
<path d="M544.91 432.85L547.43 432.98L547.43 455.98L544.91 455.85Z" fill="#909090"/>
<path d="M464.39 433.40L466.24 432.53L466.24 455.53L464.39 456.40Z" fill="#898989"/>
<path d="M458.19 432.78L460.88 433.22L460.88 456.22L458.19 455.78Z" fill="#919191"/>
<path d="M460.29 433.14L463.04 433.42L463.04 456.42L460.29 456.14Z" fill="#909090"/>
<path d="M462.44 433.41L464.96 433.25L464.96 456.25L462.44 456.41Z" fill="#8e8e8e"/>
<path d="M509.87 434.99L510.91 433.00L510.91 456.00L509.87 457.99Z" fill="#616161"/>
<path d="M498.96 433.06L500.06 435.04L500.06 458.04L498.96 456.06Z" fill="#919191"/>
<path d="M508.74 435.68L510.25 434.54L510.25 457.54L508.74 458.68Z" fill="#7c7c7c"/>
<path d="M499.67 434.60L501.20 435.71L501.20 458.71L499.67 457.60Z" fill="#929292"/>
<path d="M506.86 435.93L509.28 435.44L509.28 458.44L506.86 458.93Z" fill="#8c8c8c"/>
<path d="M500.66 435.48L503.09 435.95L503.09 458.95L500.66 458.48Z" fill="#919191"/>
<path d="M504.68 435.96L507.46 435.86L507.46 458.86L504.68 458.96Z" fill="#8e8e8e"/>
<path d="M502.50 435.88L505.28 435.95L505.28 458.95L502.50 458.88Z" fill="#8f8f8f"/>
<clipPath id="cbig"><path d="M417.80 324.80A85.50 50.27 0 1 0 588.80 324.80A85.50 50.27 0 1 0 417.80 324.80Z"/></clipPath>
<path d="M417.80 324.80A85.50 50.27 0 1 0 588.80 324.80A85.50 50.27 0 1 0 417.80 324.80Z" fill="url(#hw)"/>
<path d="M417.80 347.80A85.50 50.27 0 1 0 588.80 347.80A85.50 50.27 0 1 0 417.80 347.80Z" fill="#ffffff" clip-path="url(#cbig)"/>
<g clip-path="url(#cbig)"><path d="M419.80 325.40A83.50 48.47 0 0 1 586.80 325.40" fill="none" stroke="#949494" stroke-width="4.4"/></g>
<path d="M494.20 261.32A12.30 6.89 0 1 0 518.80 261.32A12.30 6.89 0 1 0 494.20 261.32Z" fill="url(#sw)"/>
<path d="M495.80 261.52A10.70 5.89 0 0 1 517.20 261.52" fill="none" stroke="#a4a4a4" stroke-width="1.5" stroke-linecap="round"/>
<path d="M395.91 354.91A12.30 6.89 0 1 0 420.51 354.91A12.30 6.89 0 1 0 395.91 354.91Z" fill="url(#sw)"/>
<path d="M397.51 355.11A10.70 5.89 0 0 1 418.91 355.11" fill="none" stroke="#a4a4a4" stroke-width="1.5" stroke-linecap="round"/>
<path d="M582.89 358.17A12.30 6.89 0 1 0 607.49 358.17A12.30 6.89 0 1 0 582.89 358.17Z" fill="url(#sw)"/>
<path d="M584.49 358.37A10.70 5.89 0 0 1 605.89 358.37" fill="none" stroke="#a4a4a4" stroke-width="1.5" stroke-linecap="round"/>
<path d="M486.00 417.32L489.27 417.50L491.29 417.77L492.52 418.58L493.66 420.01L494.65 421.78L495.75 424.70L497.05 428.20L498.31 431.40L499.10 433.32L499.91 434.78L500.96 435.54L502.80 435.89L504.98 435.95L507.16 435.87L508.98 435.50L510.01 434.73L510.77 433.26L511.51 431.34L512.67 428.12L513.86 424.61L514.87 421.67L515.82 419.90L516.91 418.45L518.12 417.64L520.13 417.35L523.38 417.13L526.63 416.88L528.71 416.87L530.23 417.48L531.90 418.73L533.58 420.31L535.82 423.01L538.48 426.24L540.98 429.19L542.52 430.96L543.88 432.26L545.21 432.86L547.13 432.96L549.28 432.73L551.37 432.36L553.00 431.75L553.69 430.87L553.85 429.34L553.79 427.37L553.64 424.09L553.40 420.51L553.21 417.52L553.42 415.66L553.91 414.12L554.76 413.16L556.60 412.61L559.68 411.97L562.74 411.28L564.76 411.00L566.48 411.40L568.61 412.38L570.87 413.70L574.12 416.03L578.00 418.82L581.61 421.36L583.81 422.87L585.67 423.96L587.19 424.36L589.11 424.21L591.10 423.69L592.99 423.05L594.33 422.25L594.65 421.29L594.19 419.79L593.36 417.87L591.90 414.70L590.24 411.25L588.86 408.37L588.32 406.53L588.18 404.96L588.62 403.92L590.20 403.14L592.94 402.10L595.65 401.03L597.49 400.48L599.33 400.64L601.79 401.32L604.52 402.30L608.62 404.13L613.50 406.33L618.03 408.32L620.77 409.49L623.01 410.31L624.66 410.50L626.46 410.09L628.19 409.32L629.77 408.45L630.76 407.49L630.68 406.52L629.64 405.11L628.07 403.36L625.38 400.47L622.39 397.33L619.90 394.71L618.64 393.00L617.87 391.49L617.89 390.41L619.11 389.44L621.37 388.07L623.57 386.66L625.15 385.89L627.00 385.80L629.67 386.12L632.72 386.72L637.43 387.95L643.06 389.44L648.26 390.77L651.40 391.55L653.90 392.04L655.58 392.01L657.17 391.37L658.54 390.39L659.74 389.34L660.31 388.27L659.85 387.33L658.28 386.11L656.05 384.61L652.28 382.16L648.12 379.50L644.65 377.28L642.74 375.78L641.39 374.42L640.98 373.37L641.78 372.26L643.43 370.62L645.01 368.97L646.24 368.00L648.01 367.66L650.73 367.63L653.93 367.80L659.01 368.37L665.09 369.07L670.67 369.67L674.04 370.01L676.67 370.16L678.29 369.90L679.58 369.07L680.53 367.93L681.27 366.75L681.40 365.63L680.58 364.78L678.56 363.79L675.79 362.64L671.15 360.75L666.04 358.73L661.78 357.03L659.33 355.82L657.47 354.67L656.65 353.71L656.99 352.52L657.93 350.71L658.81 348.89L659.62 347.78L661.21 347.22L663.84 346.82L667.03 346.56L672.20 346.44L678.39 346.31L684.06 346.15L687.47 346.03L690.09 345.83L691.57 345.36L692.49 344.38L692.96 343.14L693.21 341.89L692.89 340.79L691.76 340.07L689.40 339.38L686.24 338.63L680.97 337.41L675.19 336.12L670.36 335.03L667.50 334.19L665.23 333.32L664.05 332.49L663.91 331.29L664.10 329.40L664.23 327.51L664.58 326.32L665.89 325.57L668.30 324.83L671.30 324.15L676.28 323.35L682.25 322.39L687.71 321.48L690.98 320.91L693.44 320.36L694.70 319.71L695.20 318.63L695.17 317.37L694.91 316.12L694.16 315.08L692.77 314.54L690.20 314.18L686.83 313.87L681.21 313.39L675.07 312.90L669.94 312.49L666.82 312.05L664.26 311.50L662.79 310.85L662.17 309.71L661.60 307.84L660.97 305.98L660.84 304.79L661.82 303.87L663.86 302.83L666.51 301.77L671.04 300.33L676.47 298.60L681.42 296.99L684.37 296.00L686.55 295.13L687.51 294.34L687.57 293.22L687.03 291.99L686.28 290.81L685.14 289.90L683.57 289.56L680.93 289.56L677.52 289.70L671.86 289.98L665.69 290.33L660.54 290.61L657.32 290.60L654.62 290.41L652.92 289.97L651.86 288.94L650.57 287.20L649.22 285.47L648.61 284.33L649.19 283.31L650.77 282.02L652.92 280.64L656.75 278.63L661.35 276.23L665.52 274.00L668.00 272.64L669.77 271.51L670.39 270.60L670.00 269.51L668.99 268.39L667.79 267.33L666.32 266.61L664.65 266.48L662.08 266.83L658.82 267.42L653.42 268.45L647.56 269.61L642.66 270.57L639.53 270.99L636.82 271.16L634.99 270.97L633.55 270.10L631.60 268.58L629.59 267.08L628.54 266.05L628.71 264.98L629.73 263.52L631.27 261.89L634.19 259.42L637.71 256.47L640.88 253.74L642.75 252.09L644.02 250.75L644.26 249.79L643.45 248.78L642.02 247.82L640.43 246.96L638.70 246.45L637.03 246.54L634.67 247.23L631.73 248.24L626.89 249.96L621.65 251.87L617.27 253.46L614.38 254.28L611.82 254.81L609.96 254.86L608.22 254.21L605.71 252.99L603.16 251.80L601.72 250.94L601.46 249.87L601.87 248.32L602.72 246.52L604.58 243.73L606.82 240.40L608.82 237.32L609.98 235.46L610.69 233.99L610.53 233.02L609.34 232.14L607.56 231.41L605.67 230.78L603.79 230.51L602.20 230.83L600.17 231.81L597.73 233.18L593.70 235.50L589.36 238.06L585.73 240.19L583.25 241.37L580.97 242.23L579.18 242.53L577.23 242.13L574.30 241.28L571.34 240.46L569.60 239.81L568.92 238.81L568.70 237.24L568.81 235.38L569.50 232.42L570.35 228.87L571.07 225.61L571.46 223.65L571.56 222.13L571.03 221.20L569.51 220.51L567.49 220.03L565.40 219.67L563.46 219.66L562.04 220.18L560.46 221.40L558.63 223.07L555.63 225.86L552.43 228.92L549.75 231.48L547.81 232.97L545.93 234.11L544.31 234.63L542.25 234.51L539.06 234.07L535.86 233.66L533.90 233.26L532.84 232.38L532.00 230.88L531.37 229.06L530.86 226.08L530.27 222.52L529.67 219.25L529.26 217.29L528.75 215.79L527.87 214.97L526.11 214.49L523.96 214.29L521.78 214.22L519.89 214.47L518.72 215.17L517.66 216.57L516.54 218.43L514.75 221.55L512.86 224.96L511.26 227.81L509.97 229.51L508.60 230.87L507.23 231.60L505.17 231.75L501.90 231.75L498.62 231.78L496.55 231.65L495.17 230.93L493.75 229.59L492.41 227.90L490.73 225.07L488.74 221.68L486.85 218.58L485.67 216.73L484.58 215.34L483.38 214.66L481.49 214.43L479.31 214.52L477.16 214.74L475.42 215.23L474.56 216.07L474.09 217.57L473.75 219.54L473.24 222.81L472.76 226.38L472.35 229.36L471.77 231.19L470.98 232.69L469.94 233.58L468.00 234.01L464.81 234.44L461.63 234.91L459.57 235.06L457.94 234.55L456.02 233.43L454.04 231.96L451.28 229.43L447.99 226.40L444.91 223.64L443.03 221.99L441.41 220.79L439.97 220.28L438.04 220.31L435.96 220.69L433.95 221.19L432.46 221.90L431.95 222.83L432.10 224.36L432.55 226.31L433.36 229.56L434.32 233.10L435.10 236.06L435.27 237.91L435.10 239.48L434.44 240.49L432.72 241.16L429.79 242.01L426.89 242.89L424.94 243.31L423.15 243.03L420.84 242.19L418.33 241.03L414.63 238.94L410.22 236.43L406.12 234.15L403.63 232.80L401.58 231.84L399.98 231.54L398.11 231.82L396.23 232.47L394.48 233.23L393.31 234.12L393.19 235.09L393.94 236.55L395.16 238.40L397.25 241.45L399.59 244.77L401.53 247.54L402.44 249.32L402.90 250.88L402.66 251.94L401.25 252.82L398.74 254.04L396.27 255.28L394.54 255.95L392.68 255.92L390.11 255.41L387.20 254.62L382.76 253.07L377.47 251.22L372.57 249.55L369.61 248.56L367.23 247.91L365.55 247.82L363.84 248.35L362.28 249.23L360.88 250.20L360.10 251.23L360.36 252.18L361.68 253.51L363.60 255.14L366.85 257.84L370.45 260.75L373.45 263.19L375.04 264.80L376.11 266.25L376.30 267.32L375.29 268.36L373.32 269.88L371.42 271.42L370.00 272.30L368.18 272.52L365.47 272.37L362.32 271.98L357.39 271.07L351.50 269.97L346.07 269.00L342.80 268.44L340.22 268.12L338.55 268.26L337.10 269.00L335.93 270.07L334.95 271.20L334.60 272.30L335.24 273.20L337.05 274.31L339.57 275.64L343.81 277.83L348.48 280.18L352.37 282.16L354.56 283.52L356.18 284.78L356.79 285.80L356.22 286.95L354.92 288.69L353.68 290.44L352.65 291.49L350.96 291.94L348.27 292.16L345.05 292.20L339.89 291.97L333.72 291.69L328.05 291.46L324.64 291.35L322.00 291.38L320.43 291.74L319.32 292.66L318.60 293.85L318.11 295.08L318.20 296.20L319.18 296.99L321.39 297.83L324.37 298.79L329.37 300.35L334.85 302.02L339.42 303.42L342.10 304.46L344.17 305.47L345.18 306.38L345.08 307.58L344.51 309.44L344.00 311.31L343.42 312.46L341.96 313.13L339.42 313.70L336.31 314.17L331.20 314.64L325.07 315.18L319.47 315.72L316.11 316.07L313.55 316.45L312.17 317.01L311.46 318.05L311.24 319.31L311.24 320.57L311.78 321.64L313.05 322.28L315.53 322.80L318.82 323.34L324.30 324.20L330.30 325.09L335.31 325.85L338.33 326.49L340.75 327.21L342.09 327.95L342.47 329.13L342.66 331.02L342.91 332.91L342.81 334.11L341.65 334.95L339.41 335.84L336.57 336.72L331.78 337.85L326.04 339.20L320.80 340.47L317.67 341.26L315.33 341.97L314.22 342.70L313.93 343.80L314.22 345.06L314.73 346.28L315.68 347.26L317.17 347.71L319.80 347.89L323.21 347.97L328.89 348.07L335.08 348.14L340.25 348.21L343.45 348.44L346.09 348.81L347.69 349.35L348.54 350.45L349.47 352.27L350.47 354.07L350.85 355.25L350.06 356.22L348.23 357.39L345.82 358.62L341.61 360.36L336.57 362.44L331.97 364.37L329.24 365.56L327.25 366.56L326.46 367.42L326.62 368.53L327.40 369.71L328.38 370.84L329.70 371.66L331.33 371.90L333.95 371.72L337.31 371.35L342.88 370.69L348.93 369.94L353.99 369.31L357.19 369.11L359.91 369.12L361.69 369.43L362.94 370.39L364.58 372.03L366.27 373.65L367.10 374.75L366.73 375.80L365.42 377.18L363.56 378.70L360.16 380.96L356.08 383.65L352.38 386.14L350.19 387.66L348.66 388.90L348.23 389.84L348.83 390.91L350.06 391.95L351.47 392.91L353.08 393.54L354.76 393.55L357.24 393.03L360.36 392.22L365.51 390.84L371.10 389.30L375.77 388.01L378.80 387.39L381.46 387.03L383.31 387.11L384.92 387.87L387.16 389.25L389.46 390.60L390.71 391.56L390.76 392.63L390.04 394.15L388.83 395.88L386.42 398.52L383.53 401.69L380.93 404.61L379.40 406.37L378.40 407.79L378.36 408.76L379.37 409.71L380.98 410.57L382.74 411.32L384.55 411.71L386.19 411.50L388.40 410.66L391.11 409.46L395.58 407.43L400.40 405.18L404.43 403.31L407.13 402.30L409.57 401.60L411.41 401.42L413.27 401.95L416.01 402.99L418.78 404.00L420.38 404.77L420.86 405.81L420.76 407.38L420.28 409.22L418.99 412.12L417.43 415.58L416.07 418.77L415.29 420.69L414.88 422.20L415.22 423.15L416.59 423.94L418.50 424.56L420.51 425.06L422.43 425.20L423.94 424.77L425.76 423.66L427.91 422.13L431.45 419.56L435.24 416.73L438.42 414.37L440.65 413.03L442.74 412.02L444.45 411.61L446.48 411.87L449.56 412.52L452.66 413.13L454.52 413.67L455.40 414.61L455.93 416.16L456.19 418.01L456.10 421.00L455.97 424.58L455.91 427.86L455.92 429.84L456.12 431.36L456.84 432.24L458.49 432.83L460.59 433.17L462.74 433.39L464.66 433.27L465.97 432.66L467.29 431.33L468.78 429.56L471.19 426.58L473.75 423.32L475.91 420.60L477.54 419.00L479.17 417.74L480.67 417.11L482.75 417.10Z M417.80 324.80A85.50 50.27 0 1 0 588.80 324.80A85.50 50.27 0 1 0 417.80 324.80Z M494.20 261.32A12.30 6.89 0 1 0 518.80 261.32A12.30 6.89 0 1 0 494.20 261.32Z M395.91 354.91A12.30 6.89 0 1 0 420.51 354.91A12.30 6.89 0 1 0 395.91 354.91Z M582.89 358.17A12.30 6.89 0 1 0 607.49 358.17A12.30 6.89 0 1 0 582.89 358.17Z" fill="#888888" fill-rule="evenodd"/>
<path d="M486.00 417.32L489.27 417.50" stroke="#b4b4b4" stroke-opacity="0.80" stroke-width="1" stroke-linecap="round"/>
<path d="M489.27 417.50L491.29 417.77" stroke="#b4b4b4" stroke-opacity="0.80" stroke-width="1" stroke-linecap="round"/>
<path d="M491.29 417.77L492.52 418.58" stroke="#b4b4b4" stroke-opacity="0.64" stroke-width="1" stroke-linecap="round"/>
<path d="M492.52 418.58L493.66 420.01" stroke="#b4b4b4" stroke-opacity="0.40" stroke-width="1" stroke-linecap="round"/>
<path d="M493.66 420.01L494.65 421.78" stroke="#b4b4b4" stroke-opacity="0.30" stroke-width="1" stroke-linecap="round"/>
<path d="M494.65 421.78L495.75 424.70" stroke="#b4b4b4" stroke-opacity="0.20" stroke-width="1" stroke-linecap="round"/>
<path d="M495.75 424.70L497.05 428.20" stroke="#b4b4b4" stroke-opacity="0.20" stroke-width="1" stroke-linecap="round"/>
<path d="M497.05 428.20L498.31 431.40" stroke="#b4b4b4" stroke-opacity="0.21" stroke-width="1" stroke-linecap="round"/>
<path d="M498.31 431.40L499.10 433.32" stroke="#b4b4b4" stroke-opacity="0.22" stroke-width="1" stroke-linecap="round"/>
<path d="M499.10 433.32L499.91 434.78" stroke="#b4b4b4" stroke-opacity="0.29" stroke-width="1" stroke-linecap="round"/>
<path d="M499.91 434.78L500.96 435.54" stroke="#b4b4b4" stroke-opacity="0.60" stroke-width="1" stroke-linecap="round"/>
<path d="M500.96 435.54L502.80 435.89" stroke="#b4b4b4" stroke-opacity="0.80" stroke-width="1" stroke-linecap="round"/>
<path d="M502.80 435.89L504.98 435.95" stroke="#b4b4b4" stroke-opacity="0.80" stroke-width="1" stroke-linecap="round"/>
<path d="M504.98 435.95L507.16 435.87" stroke="#b4b4b4" stroke-opacity="0.80" stroke-width="1" stroke-linecap="round"/>
<path d="M507.16 435.87L508.98 435.50" stroke="#b4b4b4" stroke-opacity="0.80" stroke-width="1" stroke-linecap="round"/>
<path d="M508.98 435.50L510.01 434.73" stroke="#b4b4b4" stroke-opacity="0.58" stroke-width="1" stroke-linecap="round"/>
<path d="M510.01 434.73L510.77 433.26" stroke="#b4b4b4" stroke-opacity="0.28" stroke-width="1" stroke-linecap="round"/>
<path d="M510.77 433.26L511.51 431.34" stroke="#b4b4b4" stroke-opacity="0.21" stroke-width="1" stroke-linecap="round"/>
<path d="M511.51 431.34L512.67 428.12" stroke="#b4b4b4" stroke-opacity="0.20" stroke-width="1" stroke-linecap="round"/>
<path d="M512.67 428.12L513.86 424.61" stroke="#b4b4b4" stroke-opacity="0.18" stroke-width="1" stroke-linecap="round"/>
<path d="M513.86 424.61L514.87 421.67" stroke="#b4b4b4" stroke-opacity="0.19" stroke-width="1" stroke-linecap="round"/>
<path d="M514.87 421.67L515.82 419.90" stroke="#b4b4b4" stroke-opacity="0.28" stroke-width="1" stroke-linecap="round"/>
<path d="M515.82 419.90L516.91 418.45" stroke="#b4b4b4" stroke-opacity="0.38" stroke-width="1" stroke-linecap="round"/>
<path d="M516.91 418.45L518.12 417.64" stroke="#b4b4b4" stroke-opacity="0.62" stroke-width="1" stroke-linecap="round"/>
<path d="M518.12 417.64L520.13 417.35" stroke="#b4b4b4" stroke-opacity="0.80" stroke-width="1" stroke-linecap="round"/>
<path d="M520.13 417.35L523.38 417.13" stroke="#b4b4b4" stroke-opacity="0.80" stroke-width="1" stroke-linecap="round"/>
<path d="M523.38 417.13L526.63 416.88" stroke="#b4b4b4" stroke-opacity="0.80" stroke-width="1" stroke-linecap="round"/>
<path d="M526.63 416.88L528.71 416.87" stroke="#b4b4b4" stroke-opacity="0.80" stroke-width="1" stroke-linecap="round"/>
<path d="M528.71 416.87L530.23 417.48" stroke="#b4b4b4" stroke-opacity="0.79" stroke-width="1" stroke-linecap="round"/>
<path d="M530.23 417.48L531.90 418.73" stroke="#b4b4b4" stroke-opacity="0.59" stroke-width="1" stroke-linecap="round"/>
<path d="M531.90 418.73L533.58 420.31" stroke="#b4b4b4" stroke-opacity="0.50" stroke-width="1" stroke-linecap="round"/>
<path d="M533.58 420.31L535.82 423.01" stroke="#b4b4b4" stroke-opacity="0.41" stroke-width="1" stroke-linecap="round"/>
<path d="M535.82 423.01L538.48 426.24" stroke="#b4b4b4" stroke-opacity="0.41" stroke-width="1" stroke-linecap="round"/>
<path d="M538.48 426.24L540.98 429.19" stroke="#b4b4b4" stroke-opacity="0.42" stroke-width="1" stroke-linecap="round"/>
<path d="M540.98 429.19L542.52 430.96" stroke="#b4b4b4" stroke-opacity="0.43" stroke-width="1" stroke-linecap="round"/>
<path d="M542.52 430.96L543.88 432.26" stroke="#b4b4b4" stroke-opacity="0.50" stroke-width="1" stroke-linecap="round"/>
<path d="M543.88 432.26L545.21 432.86" stroke="#b4b4b4" stroke-opacity="0.75" stroke-width="1" stroke-linecap="round"/>
<path d="M545.21 432.86L547.13 432.96" stroke="#b4b4b4" stroke-opacity="0.80" stroke-width="1" stroke-linecap="round"/>
<path d="M547.13 432.96L549.28 432.73" stroke="#b4b4b4" stroke-opacity="0.80" stroke-width="1" stroke-linecap="round"/>
<path d="M549.28 432.73L551.37 432.36" stroke="#b4b4b4" stroke-opacity="0.80" stroke-width="1" stroke-linecap="round"/>
<path d="M551.37 432.36L553.00 431.75" stroke="#b4b4b4" stroke-opacity="0.80" stroke-width="1" stroke-linecap="round"/>
<path d="M553.00 431.75L553.69 430.87" stroke="#b4b4b4" stroke-opacity="0.39" stroke-width="1" stroke-linecap="round"/>
<path d="M553.69 430.87L553.85 429.34" stroke="#b4b4b4" stroke-opacity="0.06" stroke-width="1" stroke-linecap="round"/>
<path d="M553.21 417.52L553.42 415.66" stroke="#b4b4b4" stroke-opacity="0.06" stroke-width="1" stroke-linecap="round"/>
<path d="M553.42 415.66L553.91 414.12" stroke="#b4b4b4" stroke-opacity="0.17" stroke-width="1" stroke-linecap="round"/>
<path d="M553.91 414.12L554.76 413.16" stroke="#b4b4b4" stroke-opacity="0.44" stroke-width="1" stroke-linecap="round"/>
<path d="M554.76 413.16L556.60 412.61" stroke="#b4b4b4" stroke-opacity="0.80" stroke-width="1" stroke-linecap="round"/>
<path d="M556.60 412.61L559.68 411.97" stroke="#b4b4b4" stroke-opacity="0.80" stroke-width="1" stroke-linecap="round"/>
<path d="M559.68 411.97L562.74 411.28" stroke="#b4b4b4" stroke-opacity="0.80" stroke-width="1" stroke-linecap="round"/>
<path d="M562.74 411.28L564.76 411.00" stroke="#b4b4b4" stroke-opacity="0.80" stroke-width="1" stroke-linecap="round"/>
<path d="M564.76 411.00L566.48 411.40" stroke="#b4b4b4" stroke-opacity="0.80" stroke-width="1" stroke-linecap="round"/>
<path d="M566.48 411.40L568.61 412.38" stroke="#b4b4b4" stroke-opacity="0.75" stroke-width="1" stroke-linecap="round"/>
<path d="M568.61 412.38L570.87 413.70" stroke="#b4b4b4" stroke-opacity="0.68" stroke-width="1" stroke-linecap="round"/>
<path d="M570.87 413.70L574.12 416.03" stroke="#b4b4b4" stroke-opacity="0.60" stroke-width="1" stroke-linecap="round"/>
<path d="M574.12 416.03L578.00 418.82" stroke="#b4b4b4" stroke-opacity="0.60" stroke-width="1" stroke-linecap="round"/>
<path d="M578.00 418.82L581.61 421.36" stroke="#b4b4b4" stroke-opacity="0.61" stroke-width="1" stroke-linecap="round"/>
<path d="M581.61 421.36L583.81 422.87" stroke="#b4b4b4" stroke-opacity="0.62" stroke-width="1" stroke-linecap="round"/>
<path d="M583.81 422.87L585.67 423.96" stroke="#b4b4b4" stroke-opacity="0.67" stroke-width="1" stroke-linecap="round"/>
<path d="M585.67 423.96L587.19 424.36" stroke="#b4b4b4" stroke-opacity="0.80" stroke-width="1" stroke-linecap="round"/>
<path d="M587.19 424.36L589.11 424.21" stroke="#b4b4b4" stroke-opacity="0.80" stroke-width="1" stroke-linecap="round"/>
<path d="M589.11 424.21L591.10 423.69" stroke="#b4b4b4" stroke-opacity="0.80" stroke-width="1" stroke-linecap="round"/>
<path d="M591.10 423.69L592.99 423.05" stroke="#b4b4b4" stroke-opacity="0.80" stroke-width="1" stroke-linecap="round"/>
<path d="M592.99 423.05L594.33 422.25" stroke="#b4b4b4" stroke-opacity="0.67" stroke-width="1" stroke-linecap="round"/>
<path d="M594.33 422.25L594.65 421.29" stroke="#b4b4b4" stroke-opacity="0.18" stroke-width="1" stroke-linecap="round"/>
<path d="M588.18 404.96L588.62 403.92" stroke="#b4b4b4" stroke-opacity="0.23" stroke-width="1" stroke-linecap="round"/>
<path d="M588.62 403.92L590.20 403.14" stroke="#b4b4b4" stroke-opacity="0.73" stroke-width="1" stroke-linecap="round"/>
<path d="M590.20 403.14L592.94 402.10" stroke="#b4b4b4" stroke-opacity="0.80" stroke-width="1" stroke-linecap="round"/>
<path d="M592.94 402.10L595.65 401.03" stroke="#b4b4b4" stroke-opacity="0.79" stroke-width="1" stroke-linecap="round"/>
<path d="M595.65 401.03L597.49 400.48" stroke="#b4b4b4" stroke-opacity="0.80" stroke-width="1" stroke-linecap="round"/>
<path d="M597.49 400.48L599.33 400.64" stroke="#b4b4b4" stroke-opacity="0.80" stroke-width="1" stroke-linecap="round"/>
<path d="M599.33 400.64L601.79 401.32" stroke="#b4b4b4" stroke-opacity="0.80" stroke-width="1" stroke-linecap="round"/>
<path d="M601.79 401.32L604.52 402.30" stroke="#b4b4b4" stroke-opacity="0.80" stroke-width="1" stroke-linecap="round"/>
<path d="M604.52 402.30L608.62 404.13" stroke="#b4b4b4" stroke-opacity="0.76" stroke-width="1" stroke-linecap="round"/>
<path d="M608.62 404.13L613.50 406.33" stroke="#b4b4b4" stroke-opacity="0.76" stroke-width="1" stroke-linecap="round"/>
<path d="M613.50 406.33L618.03 408.32" stroke="#b4b4b4" stroke-opacity="0.76" stroke-width="1" stroke-linecap="round"/>
<path d="M618.03 408.32L620.77 409.49" stroke="#b4b4b4" stroke-opacity="0.77" stroke-width="1" stroke-linecap="round"/>
<path d="M620.77 409.49L623.01 410.31" stroke="#b4b4b4" stroke-opacity="0.80" stroke-width="1" stroke-linecap="round"/>
<path d="M623.01 410.31L624.66 410.50" stroke="#b4b4b4" stroke-opacity="0.80" stroke-width="1" stroke-linecap="round"/>
<path d="M624.66 410.50L626.46 410.09" stroke="#b4b4b4" stroke-opacity="0.80" stroke-width="1" stroke-linecap="round"/>
<path d="M626.46 410.09L628.19 409.32" stroke="#b4b4b4" stroke-opacity="0.76" stroke-width="1" stroke-linecap="round"/>
<path d="M628.19 409.32L629.77 408.45" stroke="#b4b4b4" stroke-opacity="0.70" stroke-width="1" stroke-linecap="round"/>
<path d="M629.77 408.45L630.76 407.49" stroke="#b4b4b4" stroke-opacity="0.49" stroke-width="1" stroke-linecap="round"/>
<path d="M617.89 390.41L619.11 389.44" stroke="#b4b4b4" stroke-opacity="0.56" stroke-width="1" stroke-linecap="round"/>
<path d="M619.11 389.44L621.37 388.07" stroke="#b4b4b4" stroke-opacity="0.66" stroke-width="1" stroke-linecap="round"/>
<path d="M621.37 388.07L623.57 386.66" stroke="#b4b4b4" stroke-opacity="0.65" stroke-width="1" stroke-linecap="round"/>
<path d="M623.57 386.66L625.15 385.89" stroke="#b4b4b4" stroke-opacity="0.73" stroke-width="1" stroke-linecap="round"/>
<path d="M625.15 385.89L627.00 385.80" stroke="#b4b4b4" stroke-opacity="0.80" stroke-width="1" stroke-linecap="round"/>
<path d="M627.00 385.80L629.67 386.12" stroke="#b4b4b4" stroke-opacity="0.80" stroke-width="1" stroke-linecap="round"/>
<path d="M629.67 386.12L632.72 386.72" stroke="#b4b4b4" stroke-opacity="0.80" stroke-width="1" stroke-linecap="round"/>
<path d="M632.72 386.72L637.43 387.95" stroke="#b4b4b4" stroke-opacity="0.80" stroke-width="1" stroke-linecap="round"/>
<path d="M637.43 387.95L643.06 389.44" stroke="#b4b4b4" stroke-opacity="0.80" stroke-width="1" stroke-linecap="round"/>
<path d="M643.06 389.44L648.26 390.77" stroke="#b4b4b4" stroke-opacity="0.80" stroke-width="1" stroke-linecap="round"/>
<path d="M648.26 390.77L651.40 391.55" stroke="#b4b4b4" stroke-opacity="0.80" stroke-width="1" stroke-linecap="round"/>
<path d="M651.40 391.55L653.90 392.04" stroke="#b4b4b4" stroke-opacity="0.80" stroke-width="1" stroke-linecap="round"/>
<path d="M653.90 392.04L655.58 392.01" stroke="#b4b4b4" stroke-opacity="0.80" stroke-width="1" stroke-linecap="round"/>
<path d="M655.58 392.01L657.17 391.37" stroke="#b4b4b4" stroke-opacity="0.79" stroke-width="1" stroke-linecap="round"/>
<path d="M657.17 391.37L658.54 390.39" stroke="#b4b4b4" stroke-opacity="0.61" stroke-width="1" stroke-linecap="round"/>
<path d="M658.54 390.39L659.74 389.34" stroke="#b4b4b4" stroke-opacity="0.53" stroke-width="1" stroke-linecap="round"/>
<path d="M659.74 389.34L660.31 388.27" stroke="#b4b4b4" stroke-opacity="0.28" stroke-width="1" stroke-linecap="round"/>
<path d="M640.98 373.37L641.78 372.26" stroke="#b4b4b4" stroke-opacity="0.37" stroke-width="1" stroke-linecap="round"/>
<path d="M641.78 372.26L643.43 370.62" stroke="#b4b4b4" stroke-opacity="0.48" stroke-width="1" stroke-linecap="round"/>
<path d="M643.43 370.62L645.01 368.97" stroke="#b4b4b4" stroke-opacity="0.46" stroke-width="1" stroke-linecap="round"/>
<path d="M645.01 368.97L646.24 368.00" stroke="#b4b4b4" stroke-opacity="0.57" stroke-width="1" stroke-linecap="round"/>
<path d="M646.24 368.00L648.01 367.66" stroke="#b4b4b4" stroke-opacity="0.80" stroke-width="1" stroke-linecap="round"/>
<path d="M648.01 367.66L650.73 367.63" stroke="#b4b4b4" stroke-opacity="0.80" stroke-width="1" stroke-linecap="round"/>
<path d="M650.73 367.63L653.93 367.80" stroke="#b4b4b4" stroke-opacity="0.80" stroke-width="1" stroke-linecap="round"/>
<path d="M653.93 367.80L659.01 368.37" stroke="#b4b4b4" stroke-opacity="0.80" stroke-width="1" stroke-linecap="round"/>
<path d="M659.01 368.37L665.09 369.07" stroke="#b4b4b4" stroke-opacity="0.80" stroke-width="1" stroke-linecap="round"/>
<path d="M665.09 369.07L670.67 369.67" stroke="#b4b4b4" stroke-opacity="0.80" stroke-width="1" stroke-linecap="round"/>
<path d="M670.67 369.67L674.04 370.01" stroke="#b4b4b4" stroke-opacity="0.80" stroke-width="1" stroke-linecap="round"/>
<path d="M674.04 370.01L676.67 370.16" stroke="#b4b4b4" stroke-opacity="0.80" stroke-width="1" stroke-linecap="round"/>
<path d="M676.67 370.16L678.29 369.90" stroke="#b4b4b4" stroke-opacity="0.80" stroke-width="1" stroke-linecap="round"/>
<path d="M678.29 369.90L679.58 369.07" stroke="#b4b4b4" stroke-opacity="0.64" stroke-width="1" stroke-linecap="round"/>
<path d="M679.58 369.07L680.53 367.93" stroke="#b4b4b4" stroke-opacity="0.42" stroke-width="1" stroke-linecap="round"/>
<path d="M680.53 367.93L681.27 366.75" stroke="#b4b4b4" stroke-opacity="0.33" stroke-width="1" stroke-linecap="round"/>
<path d="M681.27 366.75L681.40 365.63" stroke="#b4b4b4" stroke-opacity="0.06" stroke-width="1" stroke-linecap="round"/>
<path d="M656.65 353.71L656.99 352.52" stroke="#b4b4b4" stroke-opacity="0.16" stroke-width="1" stroke-linecap="round"/>
<path d="M656.99 352.52L657.93 350.71" stroke="#b4b4b4" stroke-opacity="0.28" stroke-width="1" stroke-linecap="round"/>
<path d="M657.93 350.71L658.81 348.89" stroke="#b4b4b4" stroke-opacity="0.26" stroke-width="1" stroke-linecap="round"/>
<path d="M658.81 348.89L659.62 347.78" stroke="#b4b4b4" stroke-opacity="0.37" stroke-width="1" stroke-linecap="round"/>
<path d="M659.62 347.78L661.21 347.22" stroke="#b4b4b4" stroke-opacity="0.80" stroke-width="1" stroke-linecap="round"/>
<path d="M661.21 347.22L663.84 346.82" stroke="#b4b4b4" stroke-opacity="0.80" stroke-width="1" stroke-linecap="round"/>
<path d="M663.84 346.82L667.03 346.56" stroke="#b4b4b4" stroke-opacity="0.80" stroke-width="1" stroke-linecap="round"/>
<path d="M667.03 346.56L672.20 346.44" stroke="#b4b4b4" stroke-opacity="0.80" stroke-width="1" stroke-linecap="round"/>
<path d="M672.20 346.44L678.39 346.31" stroke="#b4b4b4" stroke-opacity="0.80" stroke-width="1" stroke-linecap="round"/>
<path d="M678.39 346.31L684.06 346.15" stroke="#b4b4b4" stroke-opacity="0.80" stroke-width="1" stroke-linecap="round"/>
<path d="M684.06 346.15L687.47 346.03" stroke="#b4b4b4" stroke-opacity="0.80" stroke-width="1" stroke-linecap="round"/>
<path d="M687.47 346.03L690.09 345.83" stroke="#b4b4b4" stroke-opacity="0.80" stroke-width="1" stroke-linecap="round"/>
<path d="M690.09 345.83L691.57 345.36" stroke="#b4b4b4" stroke-opacity="0.80" stroke-width="1" stroke-linecap="round"/>
<path d="M691.57 345.36L692.49 344.38" stroke="#b4b4b4" stroke-opacity="0.46" stroke-width="1" stroke-linecap="round"/>
<path d="M692.49 344.38L692.96 343.14" stroke="#b4b4b4" stroke-opacity="0.21" stroke-width="1" stroke-linecap="round"/>
<path d="M692.96 343.14L693.21 341.89" stroke="#b4b4b4" stroke-opacity="0.11" stroke-width="1" stroke-linecap="round"/>
<path d="M663.91 331.29L664.10 329.40" stroke="#b4b4b4" stroke-opacity="0.06" stroke-width="1" stroke-linecap="round"/>
<path d="M664.23 327.51L664.58 326.32" stroke="#b4b4b4" stroke-opacity="0.16" stroke-width="1" stroke-linecap="round"/>
<path d="M664.58 326.32L665.89 325.57" stroke="#b4b4b4" stroke-opacity="0.68" stroke-width="1" stroke-linecap="round"/>
<path d="M665.89 325.57L668.30 324.83" stroke="#b4b4b4" stroke-opacity="0.80" stroke-width="1" stroke-linecap="round"/>
<path d="M668.30 324.83L671.30 324.15" stroke="#b4b4b4" stroke-opacity="0.80" stroke-width="1" stroke-linecap="round"/>
<path d="M671.30 324.15L676.28 323.35" stroke="#b4b4b4" stroke-opacity="0.80" stroke-width="1" stroke-linecap="round"/>
<path d="M676.28 323.35L682.25 322.39" stroke="#b4b4b4" stroke-opacity="0.80" stroke-width="1" stroke-linecap="round"/>
<path d="M682.25 322.39L687.71 321.48" stroke="#b4b4b4" stroke-opacity="0.80" stroke-width="1" stroke-linecap="round"/>
<path d="M687.71 321.48L690.98 320.91" stroke="#b4b4b4" stroke-opacity="0.80" stroke-width="1" stroke-linecap="round"/>
<path d="M690.98 320.91L693.44 320.36" stroke="#b4b4b4" stroke-opacity="0.80" stroke-width="1" stroke-linecap="round"/>
<path d="M693.44 320.36L694.70 319.71" stroke="#b4b4b4" stroke-opacity="0.72" stroke-width="1" stroke-linecap="round"/>
<path d="M694.70 319.71L695.20 318.63" stroke="#b4b4b4" stroke-opacity="0.25" stroke-width="1" stroke-linecap="round"/>
<path d="M660.84 304.79L661.82 303.87" stroke="#b4b4b4" stroke-opacity="0.51" stroke-width="1" stroke-linecap="round"/>
<path d="M661.82 303.87L663.86 302.83" stroke="#b4b4b4" stroke-opacity="0.72" stroke-width="1" stroke-linecap="round"/>
<path d="M663.86 302.83L666.51 301.77" stroke="#b4b4b4" stroke-opacity="0.79" stroke-width="1" stroke-linecap="round"/>
<path d="M666.51 301.77L671.04 300.33" stroke="#b4b4b4" stroke-opacity="0.80" stroke-width="1" stroke-linecap="round"/>
<path d="M671.04 300.33L676.47 298.60" stroke="#b4b4b4" stroke-opacity="0.80" stroke-width="1" stroke-linecap="round"/>
<path d="M676.47 298.60L681.42 296.99" stroke="#b4b4b4" stroke-opacity="0.80" stroke-width="1" stroke-linecap="round"/>
<path d="M681.42 296.99L684.37 296.00" stroke="#b4b4b4" stroke-opacity="0.80" stroke-width="1" stroke-linecap="round"/>
<path d="M684.37 296.00L686.55 295.13" stroke="#b4b4b4" stroke-opacity="0.79" stroke-width="1" stroke-linecap="round"/>
<path d="M686.55 295.13L687.51 294.34" stroke="#b4b4b4" stroke-opacity="0.55" stroke-width="1" stroke-linecap="round"/>
<path d="M648.61 284.33L649.19 283.31" stroke="#b4b4b4" stroke-opacity="0.30" stroke-width="1" stroke-linecap="round"/>
<path d="M649.19 283.31L650.77 282.02" stroke="#b4b4b4" stroke-opacity="0.56" stroke-width="1" stroke-linecap="round"/>
<path d="M650.77 282.02L652.92 280.64" stroke="#b4b4b4" stroke-opacity="0.64" stroke-width="1" stroke-linecap="round"/>
<path d="M652.92 280.64L656.75 278.63" stroke="#b4b4b4" stroke-opacity="0.71" stroke-width="1" stroke-linecap="round"/>
<path d="M656.75 278.63L661.35 276.23" stroke="#b4b4b4" stroke-opacity="0.71" stroke-width="1" stroke-linecap="round"/>
<path d="M661.35 276.23L665.52 274.00" stroke="#b4b4b4" stroke-opacity="0.70" stroke-width="1" stroke-linecap="round"/>
<path d="M665.52 274.00L668.00 272.64" stroke="#b4b4b4" stroke-opacity="0.70" stroke-width="1" stroke-linecap="round"/>
<path d="M668.00 272.64L669.77 271.51" stroke="#b4b4b4" stroke-opacity="0.64" stroke-width="1" stroke-linecap="round"/>
<path d="M669.77 271.51L670.39 270.60" stroke="#b4b4b4" stroke-opacity="0.35" stroke-width="1" stroke-linecap="round"/>
<path d="M628.54 266.05L628.71 264.98" stroke="#b4b4b4" stroke-opacity="0.09" stroke-width="1" stroke-linecap="round"/>
<path d="M628.71 264.98L629.73 263.52" stroke="#b4b4b4" stroke-opacity="0.36" stroke-width="1" stroke-linecap="round"/>
<path d="M629.73 263.52L631.27 261.89" stroke="#b4b4b4" stroke-opacity="0.46" stroke-width="1" stroke-linecap="round"/>
<path d="M631.27 261.89L634.19 259.42" stroke="#b4b4b4" stroke-opacity="0.54" stroke-width="1" stroke-linecap="round"/>
<path d="M634.19 259.42L637.71 256.47" stroke="#b4b4b4" stroke-opacity="0.54" stroke-width="1" stroke-linecap="round"/>
<path d="M637.71 256.47L640.88 253.74" stroke="#b4b4b4" stroke-opacity="0.54" stroke-width="1" stroke-linecap="round"/>
<path d="M640.88 253.74L642.75 252.09" stroke="#b4b4b4" stroke-opacity="0.53" stroke-width="1" stroke-linecap="round"/>
<path d="M642.75 252.09L644.02 250.75" stroke="#b4b4b4" stroke-opacity="0.46" stroke-width="1" stroke-linecap="round"/>
<path d="M644.02 250.75L644.26 249.79" stroke="#b4b4b4" stroke-opacity="0.14" stroke-width="1" stroke-linecap="round"/>
<path d="M601.46 249.87L601.87 248.32" stroke="#b4b4b4" stroke-opacity="0.15" stroke-width="1" stroke-linecap="round"/>
<path d="M601.87 248.32L602.72 246.52" stroke="#b4b4b4" stroke-opacity="0.25" stroke-width="1" stroke-linecap="round"/>
<path d="M602.72 246.52L604.58 243.73" stroke="#b4b4b4" stroke-opacity="0.35" stroke-width="1" stroke-linecap="round"/>
<path d="M604.58 243.73L606.82 240.40" stroke="#b4b4b4" stroke-opacity="0.35" stroke-width="1" stroke-linecap="round"/>
<path d="M606.82 240.40L608.82 237.32" stroke="#b4b4b4" stroke-opacity="0.34" stroke-width="1" stroke-linecap="round"/>
<path d="M608.82 237.32L609.98 235.46" stroke="#b4b4b4" stroke-opacity="0.33" stroke-width="1" stroke-linecap="round"/>
<path d="M609.98 235.46L610.69 233.99" stroke="#b4b4b4" stroke-opacity="0.26" stroke-width="1" stroke-linecap="round"/>
<path d="M568.81 235.38L569.50 232.42" stroke="#b4b4b4" stroke-opacity="0.13" stroke-width="1" stroke-linecap="round"/>
<path d="M569.50 232.42L570.35 228.87" stroke="#b4b4b4" stroke-opacity="0.13" stroke-width="1" stroke-linecap="round"/>
<path d="M570.35 228.87L571.07 225.61" stroke="#b4b4b4" stroke-opacity="0.12" stroke-width="1" stroke-linecap="round"/>
<path d="M571.07 225.61L571.46 223.65" stroke="#b4b4b4" stroke-opacity="0.11" stroke-width="1" stroke-linecap="round"/>
<path d="M431.95 222.83L432.10 224.36" stroke="#b4b4b4" stroke-opacity="0.05" stroke-width="1" stroke-linecap="round"/>
<path d="M432.10 224.36L432.55 226.31" stroke="#b4b4b4" stroke-opacity="0.13" stroke-width="1" stroke-linecap="round"/>
<path d="M432.55 226.31L433.36 229.56" stroke="#b4b4b4" stroke-opacity="0.14" stroke-width="1" stroke-linecap="round"/>
<path d="M433.36 229.56L434.32 233.10" stroke="#b4b4b4" stroke-opacity="0.15" stroke-width="1" stroke-linecap="round"/>
<path d="M434.32 233.10L435.10 236.06" stroke="#b4b4b4" stroke-opacity="0.15" stroke-width="1" stroke-linecap="round"/>
<path d="M435.10 236.06L435.27 237.91" stroke="#b4b4b4" stroke-opacity="0.05" stroke-width="1" stroke-linecap="round"/>
<path d="M393.19 235.09L393.94 236.55" stroke="#b4b4b4" stroke-opacity="0.27" stroke-width="1" stroke-linecap="round"/>
<path d="M393.94 236.55L395.16 238.40" stroke="#b4b4b4" stroke-opacity="0.34" stroke-width="1" stroke-linecap="round"/>
<path d="M395.16 238.40L397.25 241.45" stroke="#b4b4b4" stroke-opacity="0.35" stroke-width="1" stroke-linecap="round"/>
<path d="M397.25 241.45L399.59 244.77" stroke="#b4b4b4" stroke-opacity="0.36" stroke-width="1" stroke-linecap="round"/>
<path d="M399.59 244.77L401.53 247.54" stroke="#b4b4b4" stroke-opacity="0.36" stroke-width="1" stroke-linecap="round"/>
<path d="M401.53 247.54L402.44 249.32" stroke="#b4b4b4" stroke-opacity="0.27" stroke-width="1" stroke-linecap="round"/>
<path d="M402.44 249.32L402.90 250.88" stroke="#b4b4b4" stroke-opacity="0.16" stroke-width="1" stroke-linecap="round"/>
<path d="M360.10 251.23L360.36 252.18" stroke="#b4b4b4" stroke-opacity="0.15" stroke-width="1" stroke-linecap="round"/>
<path d="M360.36 252.18L361.68 253.51" stroke="#b4b4b4" stroke-opacity="0.48" stroke-width="1" stroke-linecap="round"/>
<path d="M361.68 253.51L363.60 255.14" stroke="#b4b4b4" stroke-opacity="0.54" stroke-width="1" stroke-linecap="round"/>
<path d="M363.60 255.14L366.85 257.84" stroke="#b4b4b4" stroke-opacity="0.55" stroke-width="1" stroke-linecap="round"/>
<path d="M366.85 257.84L370.45 260.75" stroke="#b4b4b4" stroke-opacity="0.56" stroke-width="1" stroke-linecap="round"/>
<path d="M370.45 260.75L373.45 263.19" stroke="#b4b4b4" stroke-opacity="0.56" stroke-width="1" stroke-linecap="round"/>
<path d="M373.45 263.19L375.04 264.80" stroke="#b4b4b4" stroke-opacity="0.47" stroke-width="1" stroke-linecap="round"/>
<path d="M375.04 264.80L376.11 266.25" stroke="#b4b4b4" stroke-opacity="0.38" stroke-width="1" stroke-linecap="round"/>
<path d="M376.11 266.25L376.30 267.32" stroke="#b4b4b4" stroke-opacity="0.10" stroke-width="1" stroke-linecap="round"/>
<path d="M334.60 272.30L335.24 273.20" stroke="#b4b4b4" stroke-opacity="0.37" stroke-width="1" stroke-linecap="round"/>
<path d="M335.24 273.20L337.05 274.31" stroke="#b4b4b4" stroke-opacity="0.66" stroke-width="1" stroke-linecap="round"/>
<path d="M337.05 274.31L339.57 275.64" stroke="#b4b4b4" stroke-opacity="0.71" stroke-width="1" stroke-linecap="round"/>
<path d="M339.57 275.64L343.81 277.83" stroke="#b4b4b4" stroke-opacity="0.72" stroke-width="1" stroke-linecap="round"/>
<path d="M343.81 277.83L348.48 280.18" stroke="#b4b4b4" stroke-opacity="0.72" stroke-width="1" stroke-linecap="round"/>
<path d="M348.48 280.18L352.37 282.16" stroke="#b4b4b4" stroke-opacity="0.72" stroke-width="1" stroke-linecap="round"/>
<path d="M352.37 282.16L354.56 283.52" stroke="#b4b4b4" stroke-opacity="0.65" stroke-width="1" stroke-linecap="round"/>
<path d="M354.56 283.52L356.18 284.78" stroke="#b4b4b4" stroke-opacity="0.57" stroke-width="1" stroke-linecap="round"/>
<path d="M356.18 284.78L356.79 285.80" stroke="#b4b4b4" stroke-opacity="0.32" stroke-width="1" stroke-linecap="round"/>
<path d="M318.20 296.20L319.18 296.99" stroke="#b4b4b4" stroke-opacity="0.56" stroke-width="1" stroke-linecap="round"/>
<path d="M319.18 296.99L321.39 297.83" stroke="#b4b4b4" stroke-opacity="0.80" stroke-width="1" stroke-linecap="round"/>
<path d="M321.39 297.83L324.37 298.79" stroke="#b4b4b4" stroke-opacity="0.80" stroke-width="1" stroke-linecap="round"/>
<path d="M324.37 298.79L329.37 300.35" stroke="#b4b4b4" stroke-opacity="0.80" stroke-width="1" stroke-linecap="round"/>
<path d="M329.37 300.35L334.85 302.02" stroke="#b4b4b4" stroke-opacity="0.80" stroke-width="1" stroke-linecap="round"/>
<path d="M334.85 302.02L339.42 303.42" stroke="#b4b4b4" stroke-opacity="0.80" stroke-width="1" stroke-linecap="round"/>
<path d="M339.42 303.42L342.10 304.46" stroke="#b4b4b4" stroke-opacity="0.80" stroke-width="1" stroke-linecap="round"/>
<path d="M342.10 304.46L344.17 305.47" stroke="#b4b4b4" stroke-opacity="0.73" stroke-width="1" stroke-linecap="round"/>
<path d="M344.17 305.47L345.18 306.38" stroke="#b4b4b4" stroke-opacity="0.52" stroke-width="1" stroke-linecap="round"/>
<path d="M311.24 320.57L311.78 321.64" stroke="#b4b4b4" stroke-opacity="0.27" stroke-width="1" stroke-linecap="round"/>
<path d="M311.78 321.64L313.05 322.28" stroke="#b4b4b4" stroke-opacity="0.73" stroke-width="1" stroke-linecap="round"/>
<path d="M313.05 322.28L315.53 322.80" stroke="#b4b4b4" stroke-opacity="0.80" stroke-width="1" stroke-linecap="round"/>
<path d="M315.53 322.80L318.82 323.34" stroke="#b4b4b4" stroke-opacity="0.80" stroke-width="1" stroke-linecap="round"/>
<path d="M318.82 323.34L324.30 324.20" stroke="#b4b4b4" stroke-opacity="0.80" stroke-width="1" stroke-linecap="round"/>
<path d="M324.30 324.20L330.30 325.09" stroke="#b4b4b4" stroke-opacity="0.80" stroke-width="1" stroke-linecap="round"/>
<path d="M330.30 325.09L335.31 325.85" stroke="#b4b4b4" stroke-opacity="0.80" stroke-width="1" stroke-linecap="round"/>
<path d="M335.31 325.85L338.33 326.49" stroke="#b4b4b4" stroke-opacity="0.80" stroke-width="1" stroke-linecap="round"/>
<path d="M338.33 326.49L340.75 327.21" stroke="#b4b4b4" stroke-opacity="0.80" stroke-width="1" stroke-linecap="round"/>
<path d="M340.75 327.21L342.09 327.95" stroke="#b4b4b4" stroke-opacity="0.69" stroke-width="1" stroke-linecap="round"/>
<path d="M342.09 327.95L342.47 329.13" stroke="#b4b4b4" stroke-opacity="0.18" stroke-width="1" stroke-linecap="round"/>
<path d="M342.47 329.13L342.66 331.02" stroke="#b4b4b4" stroke-opacity="0.05" stroke-width="1" stroke-linecap="round"/>
<path d="M342.66 331.02L342.91 332.91" stroke="#b4b4b4" stroke-opacity="0.07" stroke-width="1" stroke-linecap="round"/>
<path d="M313.93 343.80L314.22 345.06" stroke="#b4b4b4" stroke-opacity="0.13" stroke-width="1" stroke-linecap="round"/>
<path d="M314.22 345.06L314.73 346.28" stroke="#b4b4b4" stroke-opacity="0.22" stroke-width="1" stroke-linecap="round"/>
<path d="M314.73 346.28L315.68 347.26" stroke="#b4b4b4" stroke-opacity="0.47" stroke-width="1" stroke-linecap="round"/>
<path d="M315.68 347.26L317.17 347.71" stroke="#b4b4b4" stroke-opacity="0.80" stroke-width="1" stroke-linecap="round"/>
<path d="M317.17 347.71L319.80 347.89" stroke="#b4b4b4" stroke-opacity="0.80" stroke-width="1" stroke-linecap="round"/>
<path d="M319.80 347.89L323.21 347.97" stroke="#b4b4b4" stroke-opacity="0.80" stroke-width="1" stroke-linecap="round"/>
<path d="M323.21 347.97L328.89 348.07" stroke="#b4b4b4" stroke-opacity="0.80" stroke-width="1" stroke-linecap="round"/>
<path d="M328.89 348.07L335.08 348.14" stroke="#b4b4b4" stroke-opacity="0.80" stroke-width="1" stroke-linecap="round"/>
<path d="M335.08 348.14L340.25 348.21" stroke="#b4b4b4" stroke-opacity="0.80" stroke-width="1" stroke-linecap="round"/>
<path d="M340.25 348.21L343.45 348.44" stroke="#b4b4b4" stroke-opacity="0.80" stroke-width="1" stroke-linecap="round"/>
<path d="M343.45 348.44L346.09 348.81" stroke="#b4b4b4" stroke-opacity="0.80" stroke-width="1" stroke-linecap="round"/>
<path d="M346.09 348.81L347.69 349.35" stroke="#b4b4b4" stroke-opacity="0.80" stroke-width="1" stroke-linecap="round"/>
<path d="M347.69 349.35L348.54 350.45" stroke="#b4b4b4" stroke-opacity="0.39" stroke-width="1" stroke-linecap="round"/>
<path d="M348.54 350.45L349.47 352.27" stroke="#b4b4b4" stroke-opacity="0.27" stroke-width="1" stroke-linecap="round"/>
<path d="M349.47 352.27L350.47 354.07" stroke="#b4b4b4" stroke-opacity="0.29" stroke-width="1" stroke-linecap="round"/>
<path d="M350.47 354.07L350.85 355.25" stroke="#b4b4b4" stroke-opacity="0.17" stroke-width="1" stroke-linecap="round"/>
<path d="M326.46 367.42L326.62 368.53" stroke="#b4b4b4" stroke-opacity="0.08" stroke-width="1" stroke-linecap="round"/>
<path d="M326.62 368.53L327.40 369.71" stroke="#b4b4b4" stroke-opacity="0.34" stroke-width="1" stroke-linecap="round"/>
<path d="M327.40 369.71L328.38 370.84" stroke="#b4b4b4" stroke-opacity="0.43" stroke-width="1" stroke-linecap="round"/>
<path d="M328.38 370.84L329.70 371.66" stroke="#b4b4b4" stroke-opacity="0.65" stroke-width="1" stroke-linecap="round"/>
<path d="M329.70 371.66L331.33 371.90" stroke="#b4b4b4" stroke-opacity="0.80" stroke-width="1" stroke-linecap="round"/>
<path d="M331.33 371.90L333.95 371.72" stroke="#b4b4b4" stroke-opacity="0.80" stroke-width="1" stroke-linecap="round"/>
<path d="M333.95 371.72L337.31 371.35" stroke="#b4b4b4" stroke-opacity="0.80" stroke-width="1" stroke-linecap="round"/>
<path d="M337.31 371.35L342.88 370.69" stroke="#b4b4b4" stroke-opacity="0.80" stroke-width="1" stroke-linecap="round"/>
<path d="M342.88 370.69L348.93 369.94" stroke="#b4b4b4" stroke-opacity="0.80" stroke-width="1" stroke-linecap="round"/>
<path d="M348.93 369.94L353.99 369.31" stroke="#b4b4b4" stroke-opacity="0.80" stroke-width="1" stroke-linecap="round"/>
<path d="M353.99 369.31L357.19 369.11" stroke="#b4b4b4" stroke-opacity="0.80" stroke-width="1" stroke-linecap="round"/>
<path d="M357.19 369.11L359.91 369.12" stroke="#b4b4b4" stroke-opacity="0.80" stroke-width="1" stroke-linecap="round"/>
<path d="M359.91 369.12L361.69 369.43" stroke="#b4b4b4" stroke-opacity="0.80" stroke-width="1" stroke-linecap="round"/>
<path d="M361.69 369.43L362.94 370.39" stroke="#b4b4b4" stroke-opacity="0.58" stroke-width="1" stroke-linecap="round"/>
<path d="M362.94 370.39L364.58 372.03" stroke="#b4b4b4" stroke-opacity="0.48" stroke-width="1" stroke-linecap="round"/>
<path d="M364.58 372.03L366.27 373.65" stroke="#b4b4b4" stroke-opacity="0.50" stroke-width="1" stroke-linecap="round"/>
<path d="M366.27 373.65L367.10 374.75" stroke="#b4b4b4" stroke-opacity="0.39" stroke-width="1" stroke-linecap="round"/>
<path d="M348.23 389.84L348.83 390.91" stroke="#b4b4b4" stroke-opacity="0.30" stroke-width="1" stroke-linecap="round"/>
<path d="M348.83 390.91L350.06 391.95" stroke="#b4b4b4" stroke-opacity="0.54" stroke-width="1" stroke-linecap="round"/>
<path d="M350.06 391.95L351.47 392.91" stroke="#b4b4b4" stroke-opacity="0.62" stroke-width="1" stroke-linecap="round"/>
<path d="M351.47 392.91L353.08 393.54" stroke="#b4b4b4" stroke-opacity="0.80" stroke-width="1" stroke-linecap="round"/>
<path d="M353.08 393.54L354.76 393.55" stroke="#b4b4b4" stroke-opacity="0.80" stroke-width="1" stroke-linecap="round"/>
<path d="M354.76 393.55L357.24 393.03" stroke="#b4b4b4" stroke-opacity="0.80" stroke-width="1" stroke-linecap="round"/>
<path d="M357.24 393.03L360.36 392.22" stroke="#b4b4b4" stroke-opacity="0.80" stroke-width="1" stroke-linecap="round"/>
<path d="M360.36 392.22L365.51 390.84" stroke="#b4b4b4" stroke-opacity="0.80" stroke-width="1" stroke-linecap="round"/>
<path d="M365.51 390.84L371.10 389.30" stroke="#b4b4b4" stroke-opacity="0.80" stroke-width="1" stroke-linecap="round"/>
<path d="M371.10 389.30L375.77 388.01" stroke="#b4b4b4" stroke-opacity="0.80" stroke-width="1" stroke-linecap="round"/>
<path d="M375.77 388.01L378.80 387.39" stroke="#b4b4b4" stroke-opacity="0.80" stroke-width="1" stroke-linecap="round"/>
<path d="M378.80 387.39L381.46 387.03" stroke="#b4b4b4" stroke-opacity="0.80" stroke-width="1" stroke-linecap="round"/>
<path d="M381.46 387.03L383.31 387.11" stroke="#b4b4b4" stroke-opacity="0.80" stroke-width="1" stroke-linecap="round"/>
<path d="M383.31 387.11L384.92 387.87" stroke="#b4b4b4" stroke-opacity="0.74" stroke-width="1" stroke-linecap="round"/>
<path d="M384.92 387.87L387.16 389.25" stroke="#b4b4b4" stroke-opacity="0.66" stroke-width="1" stroke-linecap="round"/>
<path d="M387.16 389.25L389.46 390.60" stroke="#b4b4b4" stroke-opacity="0.67" stroke-width="1" stroke-linecap="round"/>
<path d="M389.46 390.60L390.71 391.56" stroke="#b4b4b4" stroke-opacity="0.58" stroke-width="1" stroke-linecap="round"/>
<path d="M378.36 408.76L379.37 409.71" stroke="#b4b4b4" stroke-opacity="0.50" stroke-width="1" stroke-linecap="round"/>
<path d="M379.37 409.71L380.98 410.57" stroke="#b4b4b4" stroke-opacity="0.71" stroke-width="1" stroke-linecap="round"/>
<path d="M380.98 410.57L382.74 411.32" stroke="#b4b4b4" stroke-opacity="0.77" stroke-width="1" stroke-linecap="round"/>
<path d="M382.74 411.32L384.55 411.71" stroke="#b4b4b4" stroke-opacity="0.80" stroke-width="1" stroke-linecap="round"/>
<path d="M384.55 411.71L386.19 411.50" stroke="#b4b4b4" stroke-opacity="0.80" stroke-width="1" stroke-linecap="round"/>
<path d="M386.19 411.50L388.40 410.66" stroke="#b4b4b4" stroke-opacity="0.80" stroke-width="1" stroke-linecap="round"/>
<path d="M388.40 410.66L391.11 409.46" stroke="#b4b4b4" stroke-opacity="0.76" stroke-width="1" stroke-linecap="round"/>
<path d="M391.11 409.46L395.58 407.43" stroke="#b4b4b4" stroke-opacity="0.75" stroke-width="1" stroke-linecap="round"/>
<path d="M395.58 407.43L400.40 405.18" stroke="#b4b4b4" stroke-opacity="0.75" stroke-width="1" stroke-linecap="round"/>
<path d="M400.40 405.18L404.43 403.31" stroke="#b4b4b4" stroke-opacity="0.75" stroke-width="1" stroke-linecap="round"/>
<path d="M404.43 403.31L407.13 402.30" stroke="#b4b4b4" stroke-opacity="0.80" stroke-width="1" stroke-linecap="round"/>
<path d="M407.13 402.30L409.57 401.60" stroke="#b4b4b4" stroke-opacity="0.80" stroke-width="1" stroke-linecap="round"/>
<path d="M409.57 401.60L411.41 401.42" stroke="#b4b4b4" stroke-opacity="0.80" stroke-width="1" stroke-linecap="round"/>
<path d="M411.41 401.42L413.27 401.95" stroke="#b4b4b4" stroke-opacity="0.80" stroke-width="1" stroke-linecap="round"/>
<path d="M413.27 401.95L416.01 402.99" stroke="#b4b4b4" stroke-opacity="0.80" stroke-width="1" stroke-linecap="round"/>
<path d="M416.01 402.99L418.78 404.00" stroke="#b4b4b4" stroke-opacity="0.80" stroke-width="1" stroke-linecap="round"/>
<path d="M418.78 404.00L420.38 404.77" stroke="#b4b4b4" stroke-opacity="0.74" stroke-width="1" stroke-linecap="round"/>
<path d="M420.38 404.77L420.86 405.81" stroke="#b4b4b4" stroke-opacity="0.25" stroke-width="1" stroke-linecap="round"/>
<path d="M414.88 422.20L415.22 423.15" stroke="#b4b4b4" stroke-opacity="0.20" stroke-width="1" stroke-linecap="round"/>
<path d="M415.22 423.15L416.59 423.94" stroke="#b4b4b4" stroke-opacity="0.68" stroke-width="1" stroke-linecap="round"/>
<path d="M416.59 423.94L418.50 424.56" stroke="#b4b4b4" stroke-opacity="0.80" stroke-width="1" stroke-linecap="round"/>
<path d="M418.50 424.56L420.51 425.06" stroke="#b4b4b4" stroke-opacity="0.80" stroke-width="1" stroke-linecap="round"/>
<path d="M420.51 425.06L422.43 425.20" stroke="#b4b4b4" stroke-opacity="0.80" stroke-width="1" stroke-linecap="round"/>
<path d="M422.43 425.20L423.94 424.77" stroke="#b4b4b4" stroke-opacity="0.80" stroke-width="1" stroke-linecap="round"/>
<path d="M423.94 424.77L425.76 423.66" stroke="#b4b4b4" stroke-opacity="0.66" stroke-width="1" stroke-linecap="round"/>
<path d="M425.76 423.66L427.91 422.13" stroke="#b4b4b4" stroke-opacity="0.61" stroke-width="1" stroke-linecap="round"/>
<path d="M427.91 422.13L431.45 419.56" stroke="#b4b4b4" stroke-opacity="0.60" stroke-width="1" stroke-linecap="round"/>
<path d="M431.45 419.56L435.24 416.73" stroke="#b4b4b4" stroke-opacity="0.59" stroke-width="1" stroke-linecap="round"/>
<path d="M435.24 416.73L438.42 414.37" stroke="#b4b4b4" stroke-opacity="0.59" stroke-width="1" stroke-linecap="round"/>
<path d="M438.42 414.37L440.65 413.03" stroke="#b4b4b4" stroke-opacity="0.66" stroke-width="1" stroke-linecap="round"/>
<path d="M440.65 413.03L442.74 412.02" stroke="#b4b4b4" stroke-opacity="0.74" stroke-width="1" stroke-linecap="round"/>
<path d="M442.74 412.02L444.45 411.61" stroke="#b4b4b4" stroke-opacity="0.80" stroke-width="1" stroke-linecap="round"/>
<path d="M444.45 411.61L446.48 411.87" stroke="#b4b4b4" stroke-opacity="0.80" stroke-width="1" stroke-linecap="round"/>
<path d="M446.48 411.87L449.56 412.52" stroke="#b4b4b4" stroke-opacity="0.80" stroke-width="1" stroke-linecap="round"/>
<path d="M449.56 412.52L452.66 413.13" stroke="#b4b4b4" stroke-opacity="0.80" stroke-width="1" stroke-linecap="round"/>
<path d="M452.66 413.13L454.52 413.67" stroke="#b4b4b4" stroke-opacity="0.80" stroke-width="1" stroke-linecap="round"/>
<path d="M454.52 413.67L455.40 414.61" stroke="#b4b4b4" stroke-opacity="0.45" stroke-width="1" stroke-linecap="round"/>
<path d="M455.40 414.61L455.93 416.16" stroke="#b4b4b4" stroke-opacity="0.19" stroke-width="1" stroke-linecap="round"/>
<path d="M455.93 416.16L456.19 418.01" stroke="#b4b4b4" stroke-opacity="0.08" stroke-width="1" stroke-linecap="round"/>
<path d="M455.92 429.84L456.12 431.36" stroke="#b4b4b4" stroke-opacity="0.07" stroke-width="1" stroke-linecap="round"/>
<path d="M456.12 431.36L456.84 432.24" stroke="#b4b4b4" stroke-opacity="0.41" stroke-width="1" stroke-linecap="round"/>
<path d="M456.84 432.24L458.49 432.83" stroke="#b4b4b4" stroke-opacity="0.80" stroke-width="1" stroke-linecap="round"/>
<path d="M458.49 432.83L460.59 433.17" stroke="#b4b4b4" stroke-opacity="0.80" stroke-width="1" stroke-linecap="round"/>
<path d="M460.59 433.17L462.74 433.39" stroke="#b4b4b4" stroke-opacity="0.80" stroke-width="1" stroke-linecap="round"/>
<path d="M462.74 433.39L464.66 433.27" stroke="#b4b4b4" stroke-opacity="0.80" stroke-width="1" stroke-linecap="round"/>
<path d="M464.66 433.27L465.97 432.66" stroke="#b4b4b4" stroke-opacity="0.74" stroke-width="1" stroke-linecap="round"/>
<path d="M465.97 432.66L467.29 431.33" stroke="#b4b4b4" stroke-opacity="0.48" stroke-width="1" stroke-linecap="round"/>
<path d="M467.29 431.33L468.78 429.56" stroke="#b4b4b4" stroke-opacity="0.42" stroke-width="1" stroke-linecap="round"/>
<path d="M468.78 429.56L471.19 426.58" stroke="#b4b4b4" stroke-opacity="0.41" stroke-width="1" stroke-linecap="round"/>
<path d="M471.19 426.58L473.75 423.32" stroke="#b4b4b4" stroke-opacity="0.40" stroke-width="1" stroke-linecap="round"/>
<path d="M473.75 423.32L475.91 420.60" stroke="#b4b4b4" stroke-opacity="0.40" stroke-width="1" stroke-linecap="round"/>
<path d="M475.91 420.60L477.54 419.00" stroke="#b4b4b4" stroke-opacity="0.49" stroke-width="1" stroke-linecap="round"/>
<path d="M477.54 419.00L479.17 417.74" stroke="#b4b4b4" stroke-opacity="0.58" stroke-width="1" stroke-linecap="round"/>
<path d="M479.17 417.74L480.67 417.11" stroke="#b4b4b4" stroke-opacity="0.78" stroke-width="1" stroke-linecap="round"/>
<path d="M480.67 417.11L482.75 417.10" stroke="#b4b4b4" stroke-opacity="0.80" stroke-width="1" stroke-linecap="round"/>
<path d="M482.75 417.10L486.00 417.32" stroke="#b4b4b4" stroke-opacity="0.80" stroke-width="1" stroke-linecap="round"/>
</g>
</svg>

<!-- bottom toolbar -->
<div class="a" style="left:448.2px;top:605.5px;width:262.4px;height:19.7px;background:#fff;border:1px solid #e3e6ea;border-radius:1px"></div>
<svg class="a" style="left:448px;top:605px" width="264" height="21" viewBox="448 605 264 21">
  <g>
    <rect x="453.8" y="611" width="10" height="7" rx="0.6" fill="#3a3a3a"/>
    <rect x="458" y="618" width="1.6" height="1.4" fill="#3a3a3a"/>
    <rect x="455.6" y="619.2" width="6.4" height="1.2" fill="#3a3a3a"/>
    <path d="M455.4 612.6 L457.6 612.6 L457.6 616.6 L455.4 616.6 M455.6 614.6 L457.4 614.6 M459 612.6 L460.8 612.6 Q462.2 612.6 462.2 614.6 Q462.2 616.6 460.8 616.6 L459 616.6Z" fill="none" stroke="#cfcfcf" stroke-width="0.8"/>
    <rect x="469" y="610" width="0.8" height="11" fill="#e0e2e5"/>
    <path d="M476 612.2 L477.6 612.2 M479 612.2 L480.6 612.2 M476.2 612 L476.2 613.8 M476.2 615.2 L476.2 617.6 L478.2 617.6" fill="none" stroke="#444" stroke-width="0.8"/>
    <path d="M481.4 612 L481.4 613.4" stroke="#444" stroke-width="0.8"/>
    <path d="M480.6 614.6 L480.6 620 L482 618.8 L483 620.4 L483.8 620 L482.8 618.4 L484.4 618.2Z" fill="#333"/>
    <rect x="493" y="612" width="1.6" height="6.6" fill="#333"/>
    <rect x="496.2" y="610.8" width="1" height="9" fill="#333"/>
    <rect x="499" y="612" width="1.6" height="6.6" fill="#333"/>
    <rect x="508" y="610" width="0.8" height="11" fill="#e0e2e5"/>
  </g>
  <g fill="#2e7bd0" stroke="#2e7bd0">
    <path d="M514.6 615.4 L523 615.4" stroke-width="1"/>
    <circle cx="518.8" cy="612.4" r="1" stroke="none"/><circle cx="518.8" cy="618.8" r="1" stroke="none"/>
    <path d="M518.8 612.4 L518.8 618.8" stroke-width="0.7"/>
    <circle cx="535.4" cy="612.2" r="1" stroke="none"/>
    <path d="M531 616.4 L534 616.4 L535.4 614.4 L536.8 616.4 L539.6 616.4 M531.4 619 L539.4 619" stroke-width="0.9" fill="none"/>
    <path d="M547.6 614.2 L554 614.2 L556 615.6 L554 617 L547.6 617Z" fill="none" stroke="#6da3dc" stroke-width="0.8"/>
    <rect x="564" y="611.2" width="8.6" height="8.6" fill="none" stroke-width="1"/>
    <path d="M581 611.4 L589 611.4 L589 619.6 L581 619.6Z" fill="none" stroke-width="1"/>
    <path d="M583 613.4 L587 613.4 L587 617.6 L583 617.6Z" fill="none" stroke-width="0.6"/>
    <path d="M597.4 611 L597.4 620 L605 620Z" fill="none" stroke-width="1"/>
    <path d="M599 616 L599 618.4 L601.4 618.4" fill="none" stroke-width="0.6"/>
    <circle cx="615.8" cy="613.4" r="2" fill="none" stroke-width="1.1"/>
    <circle cx="620.2" cy="617.8" r="2" fill="none" stroke-width="1.1"/>
  </g>
  <g fill="none" stroke="#a9c8ea" stroke-width="0.8">
    <rect x="630.6" y="611.4" width="8" height="8"/>
    <path d="M632.4 613.4 L636.8 613.4 M632.4 615.4 L636.8 615.4 M632.4 617.4 L636.8 617.4"/>
    <path d="M647 611.6 L649 613.6 M654.4 611.6 L652.4 613.6 M647 619.4 L649 617.4 M654.4 619.4 L652.4 617.4 M649 613.6 L652.4 613.6 L652.4 617.4 L649 617.4Z"/>
    <rect x="679.6" y="611.4" width="8.6" height="8.6"/>
    <path d="M682 613.8 L686 617.6 M686 613.8 L682 617.6"/>
  </g>
  <g fill="none" stroke="#2e7bd0" stroke-width="1">
    <rect x="663" y="611.4" width="8.6" height="8.6" rx="0.8"/>
    <path d="M665 615.8 L666.8 617.6 L669.6 613.8"/>
  </g>
  <g fill="#2e7bd0">
    <rect x="695.8" y="611" width="3.8" height="3.8"/>
    <rect x="700.8" y="615.8" width="3.8" height="3.8" fill="none" stroke="#2e7bd0" stroke-width="0.9"/>
    <path d="M700.8 611.6 L703.6 611.6 L703.6 614 M696.8 616.4 L696.8 619 L699.4 619" fill="none" stroke="#2e7bd0" stroke-width="0.8"/>
  </g>
</svg>
<div class="a" style="left:213px;top:635px;width:675px;height:2px;background:#f2fbfd"></div>
<div class="a" style="left:28px;top:0;width:1px;height:637px;background:#8f9396"></div>
</body></html>
